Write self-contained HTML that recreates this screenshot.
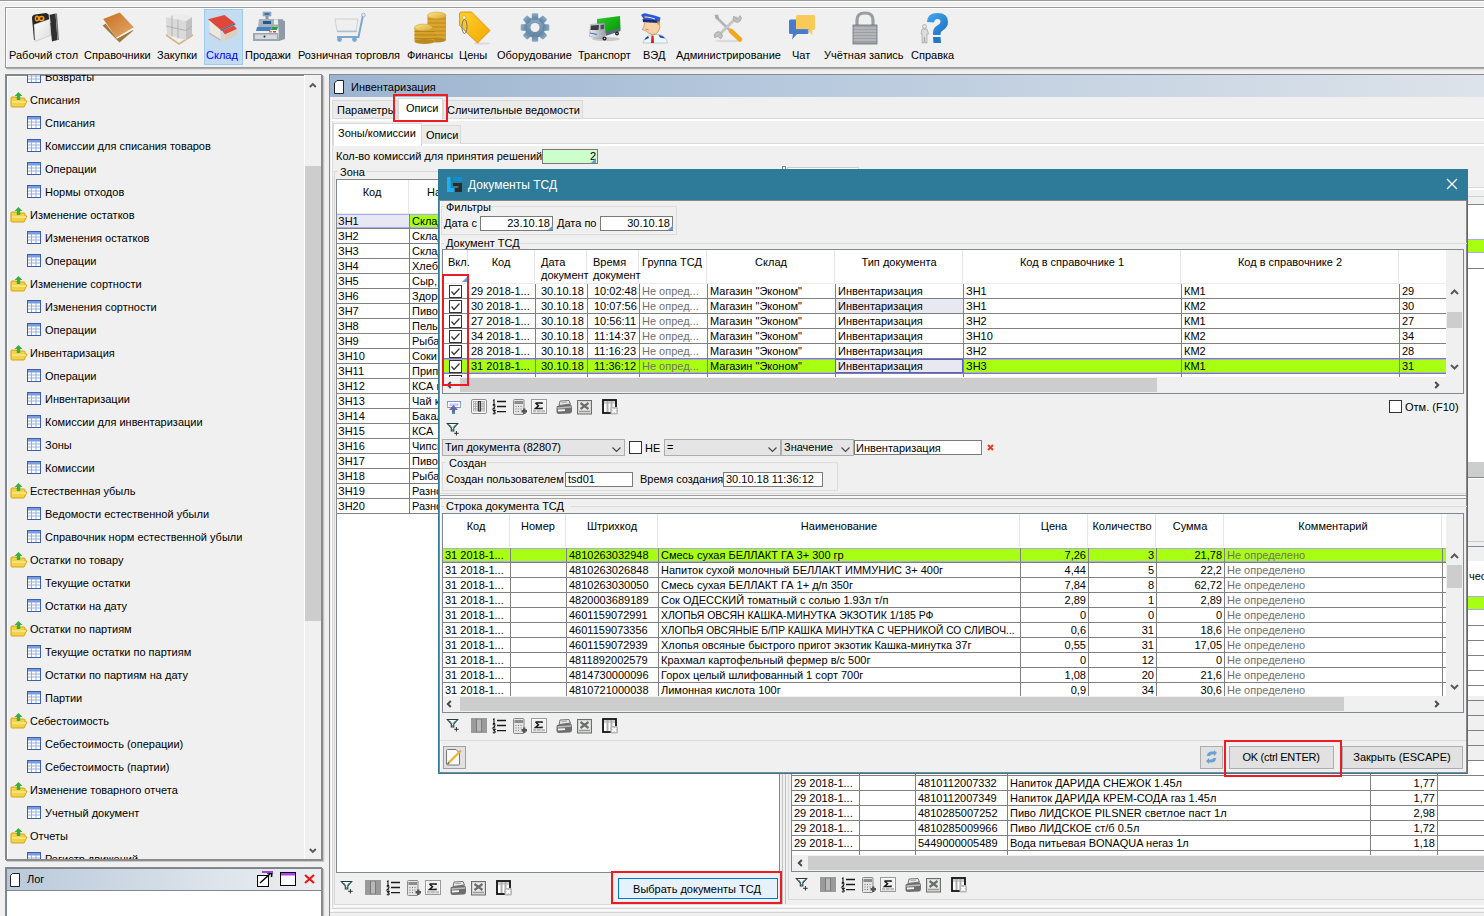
<!DOCTYPE html>
<html><head><meta charset="utf-8"><style>
html,body{margin:0;padding:0;width:1484px;height:916px;overflow:hidden;background:#f0f0f0;position:relative}
body div{position:absolute;box-sizing:border-box}
.t{font-family:"Liberation Sans",sans-serif;line-height:14px;white-space:nowrap;color:#000}
svg{position:absolute;overflow:visible}
</style></head><body>
<div style="left:0px;top:0px;width:1484px;height:1px;background:#9a9a9a"></div>
<div style="left:0px;top:1px;width:1484px;height:1px;background:#fff"></div>
<div style="left:4px;top:6px;width:1480px;height:1px;background:#fafafa"></div>
<div style="left:5px;top:7px;width:1479px;height:61px;border-top:1px solid #999;border-left:1px solid #999;border-bottom:1px solid #999;box-sizing:border-box"></div>
<div style="left:6px;top:8px;width:1478px;height:1px;background:#fff"></div>
<div style="left:6px;top:8px;width:1px;height:59px;background:#fff"></div>
<div style="left:6px;top:68px;width:1478px;height:1px;background:#acacac"></div>
<div style="left:7px;top:69px;width:1477px;height:1px;background:#dcdcdc"></div>
<div style="left:204px;top:9px;width:39px;height:56px;background:#c4dcf2;border:1px solid #9ccbf3"></div>
<div class="t" style="left:9px;top:48px;font-size:11px;">Рабочий стол</div>
<div class="t" style="left:84px;top:48px;font-size:11px;">Справочники</div>
<div class="t" style="left:157px;top:48px;font-size:11px;">Закупки</div>
<div class="t" style="left:206px;top:48px;font-size:11px;color:#0000ff">Склад</div>
<div class="t" style="left:245px;top:48px;font-size:11px;">Продажи</div>
<div class="t" style="left:298px;top:48px;font-size:11px;">Розничная торговля</div>
<div class="t" style="left:407px;top:48px;font-size:11px;">Финансы</div>
<div class="t" style="left:459px;top:48px;font-size:11px;">Цены</div>
<div class="t" style="left:497px;top:48px;font-size:11px;">Оборудование</div>
<div class="t" style="left:578px;top:48px;font-size:11px;">Транспорт</div>
<div class="t" style="left:643px;top:48px;font-size:11px;">ВЭД</div>
<div class="t" style="left:676px;top:48px;font-size:11px;">Администрирование</div>
<div class="t" style="left:792px;top:48px;font-size:11px;">Чат</div>
<div class="t" style="left:824px;top:48px;font-size:11px;">Учётная запись</div>
<div class="t" style="left:911px;top:48px;font-size:11px;">Справка</div>
<svg style="left:28px;top:10px" width="34" height="36" viewBox="28 10 34 36">
<defs><linearGradient id="pg1" x1="0" y1="0" x2="1" y2="1"><stop offset="0" stop-color="#fff"/><stop offset="1" stop-color="#dcdcdc"/></linearGradient></defs>
<path d="M32 18 Q32 15 35 14.5 L46 13 L50 15 L50 24 L35 40 L34 40 Z" fill="#262626"/>
<path d="M49 15 L55.5 13.5 L57.5 40 L52 41.5 Z" fill="#303030"/>
<path d="M55.5 13.5 L57 13.5 L59 40 L57.5 40Z" fill="#777"/>
<path d="M34 24.5 L50 19 L50.5 35.5 L35 41.5 Z" fill="url(#pg1)" stroke="#aaa" stroke-width="0.4"/>
<path d="M49 14 L50 23" stroke="#ddd" stroke-width="1"/>
<ellipse cx="37" cy="18.5" rx="1.6" ry="2.3" fill="none" stroke="#ff9a00" stroke-width="1.4"/>
<ellipse cx="41.5" cy="18.5" rx="2.2" ry="2" fill="none" stroke="#ff9a00" stroke-width="1.6"/>
</svg>
<svg style="left:98px;top:8px" width="40" height="40" viewBox="98 8 40 40">
<defs><linearGradient id="bk" x1="0" y1="0" x2="1" y2="1"><stop offset="0" stop-color="#c8701e"/><stop offset="1" stop-color="#e4aa70"/></linearGradient></defs>
<path d="M102.5 25.5 L117 17 L133.5 30.5 L119.5 42.5 Z" fill="#9f7a40"/>
<path d="M103.5 21 L120 12.5 L134 29.5 L117 38.5 Z" fill="#f6eee2"/>
<path d="M103.2 18.9 L119.8 12.6 L133.8 27.2 L116.3 37.7 Z" fill="url(#bk)"/>
<path d="M116.5 38.2 L133.5 28.5" stroke="#fff3e6" stroke-width="1.2"/>
</svg>
<svg style="left:160px;top:8px" width="36" height="38" viewBox="160 8 36 38">
<path d="M166 34 L179 43 L193 34 L193 36 L179 45 L166 36 Z" fill="#d6b382"/>
<path d="M166 17 L186 21 L186 40 L167 35 Z" fill="#dadada"/>
<path d="M186 21 L192 17 L192 35 L186 40 Z" fill="#c2c2c2"/>
<path d="M166 17 L179 13.5 L192 16.5 L186 21 Z" fill="#ececec"/>
<path d="M172 15.5 L172 36.5 M178 19.5 L178 38.5 M166 26 L186 30.5 L192 26" stroke="#a8a8a8" stroke-width="0.8" fill="none"/>
</svg>
<svg style="left:205px;top:12px" width="36" height="34" viewBox="205 12 36 34">
<path d="M209 20 L220.5 30 L220.5 40 L210 34 Z" fill="#ece8e0"/>
<path d="M209 33 L220.5 40" stroke="#b8b0a0" stroke-width="1.2"/>
<path d="M208 19.3 L224.5 15 L235 23.3 L220.5 29.8 Z" fill="#e0473a"/>
<path d="M220.5 29.8 L235 23.3 L235.5 24.5 L221 31Z" fill="#4a6a88"/>
<path d="M221 31 L221 41 L225 41 L225 34.5 Z" fill="#dcd6ca"/>
<path d="M222 30.5 L234 25.5 L237 29 L225 34.5 Z" fill="#e2483c"/>
<path d="M225 34.5 L237 29 L237 35 L225 41 Z" fill="#d8d0c0"/>
</svg>
<svg style="left:252px;top:11px" width="34" height="31" viewBox="252 11 34 31">
<rect x="263" y="12" width="8" height="4" fill="#9ab0c4" stroke="#7890a8" stroke-width="0.5"/>
<rect x="264.5" y="13" width="5" height="2" fill="#3a70b0"/>
<rect x="265.5" y="16" width="3" height="3" fill="#8a98a6"/>
<path d="M259 19 L283 19 L284 27 L258 27 Z" fill="#a8b2bc"/>
<rect x="263" y="21" width="8" height="3" fill="#1f5a90"/>
<rect x="274" y="19.5" width="6" height="5" fill="#eceeef"/>
<path d="M257 27 L272 27 L270 31 L256 31Z" fill="#4a80c0"/>
<path d="M272 27 L278 27 L277 30 L271 30Z" fill="#2fa038"/>
<rect x="269" y="31" width="3" height="1.5" fill="#f08030"/><rect x="273" y="31" width="3" height="1.5" fill="#e03070"/>
<path d="M253 33 L278 33 L279 41 L253 41 Z" fill="#9aa6b2"/>
<path d="M278 19 L285 21 L285 39 L279 41 Z" fill="#8e9aa6"/>
<rect x="255" y="34.5" width="22" height="4.5" fill="#d4dade"/>
<circle cx="264.5" cy="36.5" r="1" fill="#223"/>
</svg>
<svg style="left:332px;top:12px" width="36" height="32" viewBox="332 12 36 32">
<path d="M335 19 L358 19 L356 31 L337 31 Z" fill="#efefef" stroke="#c8c8c8" stroke-width="0.8"/>
<path d="M363 15 L358.5 37 L337 37" stroke="#7aa8d2" stroke-width="2" fill="none"/>
<path d="M337 31.5 L357 31.5" stroke="#a8c0d8" stroke-width="1.4"/>
<circle cx="363.5" cy="15" r="1.8" fill="#e8eef4" stroke="#8aaccc" stroke-width="0.8"/>
<circle cx="339.5" cy="39.5" r="2.4" fill="#7aa8d2"/>
<circle cx="354.5" cy="39.5" r="2.4" fill="#7aa8d2"/>
</svg>
<svg style="left:412px;top:10px" width="36" height="36" viewBox="412 10 36 36">
<defs><linearGradient id="cn" x1="0" y1="0" x2="1" y2="1"><stop offset="0" stop-color="#fbe890"/><stop offset="1" stop-color="#d8a830"/></linearGradient></defs>
<rect x="427.5" y="15" width="18.5" height="25" fill="#d9a52c"/>
<ellipse cx="436.7" cy="40" rx="9.2" ry="2.6" fill="#b88a20"/>
<path d="M427.5 19 H446 M427.5 23 H446 M427.5 27 H446 M427.5 31 H446 M427.5 35 H446" stroke="#b8861e" stroke-width="0.9"/>
<ellipse cx="436.7" cy="15.5" rx="9.2" ry="3.4" fill="url(#cn)" stroke="#c89628" stroke-width="0.5"/>
<rect x="414.5" y="27.5" width="20" height="14" fill="#d6a22a"/>
<ellipse cx="424.5" cy="41.5" rx="10" ry="2.5" fill="#b88a20"/>
<path d="M414.5 31.5 H434.5 M414.5 35 H436 M414.5 38.5 H434.5" stroke="#b0801c" stroke-width="0.9"/>
<ellipse cx="423.5" cy="27.5" rx="9" ry="3.4" fill="url(#cn)" stroke="#c89628" stroke-width="0.5"/>
</svg>
<svg style="left:458px;top:11px" width="34" height="34" viewBox="458 11 34 34">
<defs><linearGradient id="tg" x1="0" y1="0" x2="1" y2="1"><stop offset="0" stop-color="#ffd030"/><stop offset="1" stop-color="#f2a800"/></linearGradient></defs>
<ellipse cx="482" cy="43.5" rx="8" ry="1" fill="#d8d8d8"/>
<path d="M459.5 14 Q459.5 12 461.5 12 L471.5 12 L490 30.5 L477.5 43 L459.5 25.5 Z" fill="url(#tg)" stroke="#e08a00" stroke-width="0.9"/>
<circle cx="464" cy="17.5" r="1.8" fill="#f4f4f4" stroke="#e09000" stroke-width="0.6"/>
<ellipse cx="464.5" cy="26.5" rx="2.5" ry="7" fill="none" stroke="#687884" stroke-width="1"/>
</svg>
<svg style="left:518px;top:12px" width="34" height="32" viewBox="518 12 34 32">
<defs><linearGradient id="gr" x1="0" y1="0" x2="0" y2="1"><stop offset="0" stop-color="#8aaac6"/><stop offset="1" stop-color="#5f83a2"/></linearGradient></defs>
<g transform="translate(535,27.5)" fill="url(#gr)">
<circle r="10.3"/>
<g><rect x="-3.2" y="-14.3" width="6.4" height="6.5" rx="1.2"/></g>
<g transform="rotate(45)"><rect x="-3.2" y="-14.3" width="6.4" height="6.5" rx="1.2"/></g>
<g transform="rotate(90)"><rect x="-3.2" y="-14.3" width="6.4" height="6.5" rx="1.2"/></g>
<g transform="rotate(135)"><rect x="-3.2" y="-14.3" width="6.4" height="6.5" rx="1.2"/></g>
<g transform="rotate(180)"><rect x="-3.2" y="-14.3" width="6.4" height="6.5" rx="1.2"/></g>
<g transform="rotate(225)"><rect x="-3.2" y="-14.3" width="6.4" height="6.5" rx="1.2"/></g>
<g transform="rotate(270)"><rect x="-3.2" y="-14.3" width="6.4" height="6.5" rx="1.2"/></g>
<g transform="rotate(315)"><rect x="-3.2" y="-14.3" width="6.4" height="6.5" rx="1.2"/></g>
</g>
<circle cx="535" cy="27.5" r="4.6" fill="#f0f0f0"/>
</svg>
<svg style="left:586px;top:14px" width="36" height="30" viewBox="586 14 36 30">
<defs><linearGradient id="trg" x1="0" y1="0" x2="1" y2="1"><stop offset="0" stop-color="#22d022"/><stop offset="1" stop-color="#0a900a"/></linearGradient>
<linearGradient id="cab" x1="0" y1="0" x2="1" y2="0"><stop offset="0" stop-color="#e8ecf0"/><stop offset="1" stop-color="#9aa0a8"/></linearGradient></defs>
<ellipse cx="606" cy="39" rx="14" ry="2" fill="#c8c8c8"/>
<path d="M597 19 L620 16 L620.5 28.5 L606.5 33 L597 31.5 Z" fill="url(#trg)"/>
<path d="M605.5 32 L620.5 28 L620.5 31 L605.5 36 Z" fill="#5a6a7a"/>
<path d="M590.5 24.5 L604.5 23 L605.5 33.5 L602 39 L589.5 36.5 Z" fill="url(#cab)" stroke="#8a9098" stroke-width="0.5"/>
<path d="M591 25.5 L599 25 L598.5 30 L590.5 30 Z" fill="#3a3e44"/>
<path d="M600.5 25 L604 24.5 L604 29 L600.5 29.5Z" fill="#4a5058"/>
<path d="M590 33 L597 34.5" stroke="#3a70c0" stroke-width="1"/>
<circle cx="604.5" cy="38.5" r="2" fill="#1a1a1a"/><circle cx="604.5" cy="38.5" r="0.8" fill="#ddd"/>
<circle cx="617" cy="33.5" r="1.9" fill="#1a1a1a"/><circle cx="617" cy="33.5" r="0.7" fill="#ddd"/>
</svg>
<svg style="left:639px;top:11px" width="30" height="34" viewBox="639 11 30 34">
<path d="M643 43 Q645 36.5 652 34.5 L660 34.5 Q666 36.5 667.5 43 Z" fill="#eef8fb" stroke="#7aa8b0" stroke-width="0.5"/>
<path d="M651.5 35.5 L653.5 35.5 L654 43 L651 43 Z" fill="#e81818"/>
<path d="M658.5 35 Q663.5 35.5 665 38.5 L660 37.5Z" fill="#1a40c0"/><path d="M648 36 Q645 37.5 644.5 40 L649 38Z" fill="#1a40c0"/>
<path d="M644.5 21.5 L659.5 22.5 Q661 28 658 32 Q656 35 652 34.5 Q648 33.5 646 31 L642 29.5 L644 27 Z" fill="#f6d2a6" stroke="#9a6a40" stroke-width="0.5"/>
<path d="M645.5 29 L648.5 30" stroke="#8a5a30" stroke-width="0.6"/>
<path d="M641 15 Q644 12 648 14 Q655 15 660.5 17.5 L660 20.5 L644 19.5 Z" fill="#2a58d8"/>
<path d="M642.5 19 L660 20.5 L659 23 L643 22 Z" fill="#1a2a80"/>
<path d="M646 17 L650 17.5 L655 19" stroke="#e8eef8" stroke-width="1"/>
<circle cx="645.5" cy="17" r="1.1" fill="#e8b020"/>
<path d="M657.5 21 L660 22 L659.5 25 L657 24 Z" fill="#e0a020"/>
</svg>
<svg style="left:711px;top:12px" width="34" height="32" viewBox="711 12 34 32">
<ellipse cx="728" cy="41" rx="13" ry="1.3" fill="#dcdcdc"/>
<path d="M716 17 L738 38" stroke="#b4b4b4" stroke-width="2.6"/>
<path d="M714.5 15 L718 14.5 L719 18.5 L716 19Z" fill="#a8a8a8"/>
<path d="M737 17 L718 36" stroke="#c4c4c4" stroke-width="2.8"/>
<path d="M740 15.5 A4 4 0 1 1 734 16 L736 18.5 L738.5 18 Z" fill="#c0c0c0" stroke="#9a9a9a" stroke-width="0.6"/>
<path d="M715 38 A4 4 0 1 1 720.5 39 L718 36.5 L716 37 Z" fill="#c0c0c0" stroke="#9a9a9a" stroke-width="0.6"/>
<path d="M731 31 L740 39.5" stroke="#f2a81a" stroke-width="4.6" stroke-linecap="round"/>
</svg>
<svg style="left:787px;top:13px" width="30" height="30" viewBox="787 13 30 30">
<path d="M789 21 Q789 19.5 790.5 19.5 L807 19.5 Q808.5 19.5 808.5 21 L808.5 32.5 Q808.5 34 807 34 L797 34 L792 39.5 L793 34 L790.5 34 Q789 34 789 32.5 Z" fill="#4a7acc"/>
<path d="M796 16.5 Q796 15 797.5 15 L813.5 15 Q815 15 815 16.5 L815 28.5 Q815 30 813.5 30 L812 30 L812.5 35.5 L807.5 30 L797.5 30 Q796 30 796 28.5 Z" fill="#f8cb58"/>
<path d="M796 29 L808.5 29 L808.5 30 L796 30Z" fill="#5a86d0"/>
</svg>
<svg style="left:851px;top:11px" width="28" height="35" viewBox="851 11 28 35">
<path d="M857 25 L857 20 Q857 13 865 13 Q873 13 873 20 L873 25" stroke="#9a9ea2" stroke-width="3.2" fill="none"/>
<rect x="853" y="25" width="24" height="19" rx="1" fill="#9da1a5"/>
<path d="M853 28 H877 M853 31 H877 M853 34 H877 M853 37 H877 M853 40 H877" stroke="#c7cacd" stroke-width="1"/>
<rect x="853" y="25" width="24" height="19" fill="none" stroke="#6e7276" stroke-width="0.8"/>
</svg>
<svg style="left:918px;top:11px" width="32" height="34" viewBox="918 11 32 34">
<defs><linearGradient id="hq" x1="0" y1="0" x2="1" y2="1"><stop offset="0" stop-color="#48a8f0"/><stop offset="1" stop-color="#1a70c0"/></linearGradient></defs>
<path d="M927 22 Q927 13 937.5 13 Q948 13 948 22 Q948 27.5 942 31 Q940.5 32 940.5 34 L940.5 35 L933 35 L933 32.5 Q933 27.5 938 25 Q940.5 23.5 940.5 21.5 Q940.5 19 937.5 19 Q934.5 19 934 22.5 Z" fill="url(#hq)"/>
<path d="M933 37 L940.5 37 L941 43 L933.5 43 Z" fill="#1f78c8"/>
<circle cx="924.5" cy="26.5" r="2" fill="#e4e4e4" stroke="#888" stroke-width="0.5"/>
<path d="M922 29 L927 29 L928.5 34 L927 34 L927 43 L925 43 L924.5 37 L924 43 L922 43 L922 34 L921 34 Z" fill="#dcdcdc" stroke="#888" stroke-width="0.5"/>
</svg>
<div style="left:5px;top:74px;width:317px;height:786px;border:1px solid #8a8a8a;background:#f0f0f0"></div>
<div style="left:6px;top:75px;width:315px;height:1px;background:#7c828e"></div>
<div style="left:6px;top:75px;width:1px;height:784px;background:#7c828e"></div>
<div style="left:322px;top:75px;width:1px;height:786px;background:#8c8c8c"></div>
<div style="left:323px;top:76px;width:1px;height:785px;background:#c4c4c4"></div>
<div style="left:324px;top:77px;width:1px;height:784px;background:#e6e6e6"></div>
<div style="left:6px;top:860px;width:317px;height:1px;background:#8c8c8c"></div>
<div style="left:7px;top:861px;width:317px;height:1px;background:#c8c8c8"></div>
<div style="left:7px;top:76px;width:1px;height:783px;background:#fff"></div>
<div style="left:7px;top:76px;width:297px;height:1px;background:#fff"></div>
<div style="left:6px;top:75px;width:298px;height:784px;overflow:hidden">
<svg style="left:21px;top:-5px" width="14" height="13" viewBox="0 0 14 13"><rect x="0.5" y="0.5" width="13" height="12" fill="#fff" stroke="#3a5fb0"/><rect x="1" y="1" width="12" height="2.5" fill="#7a9de0"/><path d="M1 6 H13 M1 9 H13 M4.5 3 V12 M9 3 V12" stroke="#9ab0d8" stroke-width="1"/></svg>
<div class="t" style="left:39px;top:-5px;font-size:11px;">Возвраты</div>
<svg style="left:4px;top:17px" width="18" height="16" viewBox="0 0 18 16"><path d="M1 6 Q1 5 2 5 L6 5 L7 6 L14 6 Q15 6 15 7 L15 9 L17 9 L14 15 L2 15 Q1 15 1 14 Z" fill="#f3d24a" stroke="#d4a40c" stroke-width="1"/><path d="M2 10 L16 10" stroke="#fbe98a" stroke-width="1.5"/><path d="M8.5 0 L12.5 4 L10.2 4 L10.2 8 L6.8 8 L6.8 4 L4.5 4 Z" fill="#3cae3c"/></svg>
<div class="t" style="left:24px;top:18px;font-size:11px;">Списания</div>
<svg style="left:21px;top:41px" width="14" height="13" viewBox="0 0 14 13"><rect x="0.5" y="0.5" width="13" height="12" fill="#fff" stroke="#3a5fb0"/><rect x="1" y="1" width="12" height="2.5" fill="#7a9de0"/><path d="M1 6 H13 M1 9 H13 M4.5 3 V12 M9 3 V12" stroke="#9ab0d8" stroke-width="1"/></svg>
<div class="t" style="left:39px;top:41px;font-size:11px;">Списания</div>
<svg style="left:21px;top:64px" width="14" height="13" viewBox="0 0 14 13"><rect x="0.5" y="0.5" width="13" height="12" fill="#fff" stroke="#3a5fb0"/><rect x="1" y="1" width="12" height="2.5" fill="#7a9de0"/><path d="M1 6 H13 M1 9 H13 M4.5 3 V12 M9 3 V12" stroke="#9ab0d8" stroke-width="1"/></svg>
<div class="t" style="left:39px;top:64px;font-size:11px;">Комиссии для списания товаров</div>
<svg style="left:21px;top:87px" width="14" height="13" viewBox="0 0 14 13"><rect x="0.5" y="0.5" width="13" height="12" fill="#fff" stroke="#3a5fb0"/><rect x="1" y="1" width="12" height="2.5" fill="#7a9de0"/><path d="M1 6 H13 M1 9 H13 M4.5 3 V12 M9 3 V12" stroke="#9ab0d8" stroke-width="1"/></svg>
<div class="t" style="left:39px;top:87px;font-size:11px;">Операции</div>
<svg style="left:21px;top:110px" width="14" height="13" viewBox="0 0 14 13"><rect x="0.5" y="0.5" width="13" height="12" fill="#fff" stroke="#3a5fb0"/><rect x="1" y="1" width="12" height="2.5" fill="#7a9de0"/><path d="M1 6 H13 M1 9 H13 M4.5 3 V12 M9 3 V12" stroke="#9ab0d8" stroke-width="1"/></svg>
<div class="t" style="left:39px;top:110px;font-size:11px;">Нормы отходов</div>
<svg style="left:4px;top:132px" width="18" height="16" viewBox="0 0 18 16"><path d="M1 6 Q1 5 2 5 L6 5 L7 6 L14 6 Q15 6 15 7 L15 9 L17 9 L14 15 L2 15 Q1 15 1 14 Z" fill="#f3d24a" stroke="#d4a40c" stroke-width="1"/><path d="M2 10 L16 10" stroke="#fbe98a" stroke-width="1.5"/><path d="M8.5 0 L12.5 4 L10.2 4 L10.2 8 L6.8 8 L6.8 4 L4.5 4 Z" fill="#3cae3c"/></svg>
<div class="t" style="left:24px;top:133px;font-size:11px;">Изменение остатков</div>
<svg style="left:21px;top:156px" width="14" height="13" viewBox="0 0 14 13"><rect x="0.5" y="0.5" width="13" height="12" fill="#fff" stroke="#3a5fb0"/><rect x="1" y="1" width="12" height="2.5" fill="#7a9de0"/><path d="M1 6 H13 M1 9 H13 M4.5 3 V12 M9 3 V12" stroke="#9ab0d8" stroke-width="1"/></svg>
<div class="t" style="left:39px;top:156px;font-size:11px;">Изменения остатков</div>
<svg style="left:21px;top:179px" width="14" height="13" viewBox="0 0 14 13"><rect x="0.5" y="0.5" width="13" height="12" fill="#fff" stroke="#3a5fb0"/><rect x="1" y="1" width="12" height="2.5" fill="#7a9de0"/><path d="M1 6 H13 M1 9 H13 M4.5 3 V12 M9 3 V12" stroke="#9ab0d8" stroke-width="1"/></svg>
<div class="t" style="left:39px;top:179px;font-size:11px;">Операции</div>
<svg style="left:4px;top:201px" width="18" height="16" viewBox="0 0 18 16"><path d="M1 6 Q1 5 2 5 L6 5 L7 6 L14 6 Q15 6 15 7 L15 9 L17 9 L14 15 L2 15 Q1 15 1 14 Z" fill="#f3d24a" stroke="#d4a40c" stroke-width="1"/><path d="M2 10 L16 10" stroke="#fbe98a" stroke-width="1.5"/><path d="M8.5 0 L12.5 4 L10.2 4 L10.2 8 L6.8 8 L6.8 4 L4.5 4 Z" fill="#3cae3c"/></svg>
<div class="t" style="left:24px;top:202px;font-size:11px;">Изменение сортности</div>
<svg style="left:21px;top:225px" width="14" height="13" viewBox="0 0 14 13"><rect x="0.5" y="0.5" width="13" height="12" fill="#fff" stroke="#3a5fb0"/><rect x="1" y="1" width="12" height="2.5" fill="#7a9de0"/><path d="M1 6 H13 M1 9 H13 M4.5 3 V12 M9 3 V12" stroke="#9ab0d8" stroke-width="1"/></svg>
<div class="t" style="left:39px;top:225px;font-size:11px;">Изменения сортности</div>
<svg style="left:21px;top:248px" width="14" height="13" viewBox="0 0 14 13"><rect x="0.5" y="0.5" width="13" height="12" fill="#fff" stroke="#3a5fb0"/><rect x="1" y="1" width="12" height="2.5" fill="#7a9de0"/><path d="M1 6 H13 M1 9 H13 M4.5 3 V12 M9 3 V12" stroke="#9ab0d8" stroke-width="1"/></svg>
<div class="t" style="left:39px;top:248px;font-size:11px;">Операции</div>
<svg style="left:4px;top:270px" width="18" height="16" viewBox="0 0 18 16"><path d="M1 6 Q1 5 2 5 L6 5 L7 6 L14 6 Q15 6 15 7 L15 9 L17 9 L14 15 L2 15 Q1 15 1 14 Z" fill="#f3d24a" stroke="#d4a40c" stroke-width="1"/><path d="M2 10 L16 10" stroke="#fbe98a" stroke-width="1.5"/><path d="M8.5 0 L12.5 4 L10.2 4 L10.2 8 L6.8 8 L6.8 4 L4.5 4 Z" fill="#3cae3c"/></svg>
<div class="t" style="left:24px;top:271px;font-size:11px;">Инвентаризация</div>
<svg style="left:21px;top:294px" width="14" height="13" viewBox="0 0 14 13"><rect x="0.5" y="0.5" width="13" height="12" fill="#fff" stroke="#3a5fb0"/><rect x="1" y="1" width="12" height="2.5" fill="#7a9de0"/><path d="M1 6 H13 M1 9 H13 M4.5 3 V12 M9 3 V12" stroke="#9ab0d8" stroke-width="1"/></svg>
<div class="t" style="left:39px;top:294px;font-size:11px;">Операции</div>
<svg style="left:21px;top:317px" width="14" height="13" viewBox="0 0 14 13"><rect x="0.5" y="0.5" width="13" height="12" fill="#fff" stroke="#3a5fb0"/><rect x="1" y="1" width="12" height="2.5" fill="#7a9de0"/><path d="M1 6 H13 M1 9 H13 M4.5 3 V12 M9 3 V12" stroke="#9ab0d8" stroke-width="1"/></svg>
<div class="t" style="left:39px;top:317px;font-size:11px;">Инвентаризации</div>
<svg style="left:21px;top:340px" width="14" height="13" viewBox="0 0 14 13"><rect x="0.5" y="0.5" width="13" height="12" fill="#fff" stroke="#3a5fb0"/><rect x="1" y="1" width="12" height="2.5" fill="#7a9de0"/><path d="M1 6 H13 M1 9 H13 M4.5 3 V12 M9 3 V12" stroke="#9ab0d8" stroke-width="1"/></svg>
<div class="t" style="left:39px;top:340px;font-size:11px;">Комиссии для инвентаризации</div>
<svg style="left:21px;top:363px" width="14" height="13" viewBox="0 0 14 13"><rect x="0.5" y="0.5" width="13" height="12" fill="#fff" stroke="#3a5fb0"/><rect x="1" y="1" width="12" height="2.5" fill="#7a9de0"/><path d="M1 6 H13 M1 9 H13 M4.5 3 V12 M9 3 V12" stroke="#9ab0d8" stroke-width="1"/></svg>
<div class="t" style="left:39px;top:363px;font-size:11px;">Зоны</div>
<svg style="left:21px;top:386px" width="14" height="13" viewBox="0 0 14 13"><rect x="0.5" y="0.5" width="13" height="12" fill="#fff" stroke="#3a5fb0"/><rect x="1" y="1" width="12" height="2.5" fill="#7a9de0"/><path d="M1 6 H13 M1 9 H13 M4.5 3 V12 M9 3 V12" stroke="#9ab0d8" stroke-width="1"/></svg>
<div class="t" style="left:39px;top:386px;font-size:11px;">Комиссии</div>
<svg style="left:4px;top:408px" width="18" height="16" viewBox="0 0 18 16"><path d="M1 6 Q1 5 2 5 L6 5 L7 6 L14 6 Q15 6 15 7 L15 9 L17 9 L14 15 L2 15 Q1 15 1 14 Z" fill="#f3d24a" stroke="#d4a40c" stroke-width="1"/><path d="M2 10 L16 10" stroke="#fbe98a" stroke-width="1.5"/><path d="M8.5 0 L12.5 4 L10.2 4 L10.2 8 L6.8 8 L6.8 4 L4.5 4 Z" fill="#3cae3c"/></svg>
<div class="t" style="left:24px;top:409px;font-size:11px;">Естественная убыль</div>
<svg style="left:21px;top:432px" width="14" height="13" viewBox="0 0 14 13"><rect x="0.5" y="0.5" width="13" height="12" fill="#fff" stroke="#3a5fb0"/><rect x="1" y="1" width="12" height="2.5" fill="#7a9de0"/><path d="M1 6 H13 M1 9 H13 M4.5 3 V12 M9 3 V12" stroke="#9ab0d8" stroke-width="1"/></svg>
<div class="t" style="left:39px;top:432px;font-size:11px;">Ведомости естественной убыли</div>
<svg style="left:21px;top:455px" width="14" height="13" viewBox="0 0 14 13"><rect x="0.5" y="0.5" width="13" height="12" fill="#fff" stroke="#3a5fb0"/><rect x="1" y="1" width="12" height="2.5" fill="#7a9de0"/><path d="M1 6 H13 M1 9 H13 M4.5 3 V12 M9 3 V12" stroke="#9ab0d8" stroke-width="1"/></svg>
<div class="t" style="left:39px;top:455px;font-size:11px;">Справочник норм естественной убыли</div>
<svg style="left:4px;top:477px" width="18" height="16" viewBox="0 0 18 16"><path d="M1 6 Q1 5 2 5 L6 5 L7 6 L14 6 Q15 6 15 7 L15 9 L17 9 L14 15 L2 15 Q1 15 1 14 Z" fill="#f3d24a" stroke="#d4a40c" stroke-width="1"/><path d="M2 10 L16 10" stroke="#fbe98a" stroke-width="1.5"/><path d="M8.5 0 L12.5 4 L10.2 4 L10.2 8 L6.8 8 L6.8 4 L4.5 4 Z" fill="#3cae3c"/></svg>
<div class="t" style="left:24px;top:478px;font-size:11px;">Остатки по товару</div>
<svg style="left:21px;top:501px" width="14" height="13" viewBox="0 0 14 13"><rect x="0.5" y="0.5" width="13" height="12" fill="#fff" stroke="#3a5fb0"/><rect x="1" y="1" width="12" height="2.5" fill="#7a9de0"/><path d="M1 6 H13 M1 9 H13 M4.5 3 V12 M9 3 V12" stroke="#9ab0d8" stroke-width="1"/></svg>
<div class="t" style="left:39px;top:501px;font-size:11px;">Текущие остатки</div>
<svg style="left:21px;top:524px" width="14" height="13" viewBox="0 0 14 13"><rect x="0.5" y="0.5" width="13" height="12" fill="#fff" stroke="#3a5fb0"/><rect x="1" y="1" width="12" height="2.5" fill="#7a9de0"/><path d="M1 6 H13 M1 9 H13 M4.5 3 V12 M9 3 V12" stroke="#9ab0d8" stroke-width="1"/></svg>
<div class="t" style="left:39px;top:524px;font-size:11px;">Остатки на дату</div>
<svg style="left:4px;top:546px" width="18" height="16" viewBox="0 0 18 16"><path d="M1 6 Q1 5 2 5 L6 5 L7 6 L14 6 Q15 6 15 7 L15 9 L17 9 L14 15 L2 15 Q1 15 1 14 Z" fill="#f3d24a" stroke="#d4a40c" stroke-width="1"/><path d="M2 10 L16 10" stroke="#fbe98a" stroke-width="1.5"/><path d="M8.5 0 L12.5 4 L10.2 4 L10.2 8 L6.8 8 L6.8 4 L4.5 4 Z" fill="#3cae3c"/></svg>
<div class="t" style="left:24px;top:547px;font-size:11px;">Остатки по партиям</div>
<svg style="left:21px;top:570px" width="14" height="13" viewBox="0 0 14 13"><rect x="0.5" y="0.5" width="13" height="12" fill="#fff" stroke="#3a5fb0"/><rect x="1" y="1" width="12" height="2.5" fill="#7a9de0"/><path d="M1 6 H13 M1 9 H13 M4.5 3 V12 M9 3 V12" stroke="#9ab0d8" stroke-width="1"/></svg>
<div class="t" style="left:39px;top:570px;font-size:11px;">Текущие остатки по партиям</div>
<svg style="left:21px;top:593px" width="14" height="13" viewBox="0 0 14 13"><rect x="0.5" y="0.5" width="13" height="12" fill="#fff" stroke="#3a5fb0"/><rect x="1" y="1" width="12" height="2.5" fill="#7a9de0"/><path d="M1 6 H13 M1 9 H13 M4.5 3 V12 M9 3 V12" stroke="#9ab0d8" stroke-width="1"/></svg>
<div class="t" style="left:39px;top:593px;font-size:11px;">Остатки по партиям на дату</div>
<svg style="left:21px;top:616px" width="14" height="13" viewBox="0 0 14 13"><rect x="0.5" y="0.5" width="13" height="12" fill="#fff" stroke="#3a5fb0"/><rect x="1" y="1" width="12" height="2.5" fill="#7a9de0"/><path d="M1 6 H13 M1 9 H13 M4.5 3 V12 M9 3 V12" stroke="#9ab0d8" stroke-width="1"/></svg>
<div class="t" style="left:39px;top:616px;font-size:11px;">Партии</div>
<svg style="left:4px;top:638px" width="18" height="16" viewBox="0 0 18 16"><path d="M1 6 Q1 5 2 5 L6 5 L7 6 L14 6 Q15 6 15 7 L15 9 L17 9 L14 15 L2 15 Q1 15 1 14 Z" fill="#f3d24a" stroke="#d4a40c" stroke-width="1"/><path d="M2 10 L16 10" stroke="#fbe98a" stroke-width="1.5"/><path d="M8.5 0 L12.5 4 L10.2 4 L10.2 8 L6.8 8 L6.8 4 L4.5 4 Z" fill="#3cae3c"/></svg>
<div class="t" style="left:24px;top:639px;font-size:11px;">Себестоимость</div>
<svg style="left:21px;top:662px" width="14" height="13" viewBox="0 0 14 13"><rect x="0.5" y="0.5" width="13" height="12" fill="#fff" stroke="#3a5fb0"/><rect x="1" y="1" width="12" height="2.5" fill="#7a9de0"/><path d="M1 6 H13 M1 9 H13 M4.5 3 V12 M9 3 V12" stroke="#9ab0d8" stroke-width="1"/></svg>
<div class="t" style="left:39px;top:662px;font-size:11px;">Себестоимость (операции)</div>
<svg style="left:21px;top:685px" width="14" height="13" viewBox="0 0 14 13"><rect x="0.5" y="0.5" width="13" height="12" fill="#fff" stroke="#3a5fb0"/><rect x="1" y="1" width="12" height="2.5" fill="#7a9de0"/><path d="M1 6 H13 M1 9 H13 M4.5 3 V12 M9 3 V12" stroke="#9ab0d8" stroke-width="1"/></svg>
<div class="t" style="left:39px;top:685px;font-size:11px;">Себестоимость (партии)</div>
<svg style="left:4px;top:707px" width="18" height="16" viewBox="0 0 18 16"><path d="M1 6 Q1 5 2 5 L6 5 L7 6 L14 6 Q15 6 15 7 L15 9 L17 9 L14 15 L2 15 Q1 15 1 14 Z" fill="#f3d24a" stroke="#d4a40c" stroke-width="1"/><path d="M2 10 L16 10" stroke="#fbe98a" stroke-width="1.5"/><path d="M8.5 0 L12.5 4 L10.2 4 L10.2 8 L6.8 8 L6.8 4 L4.5 4 Z" fill="#3cae3c"/></svg>
<div class="t" style="left:24px;top:708px;font-size:11px;">Изменение товарного отчета</div>
<svg style="left:21px;top:731px" width="14" height="13" viewBox="0 0 14 13"><rect x="0.5" y="0.5" width="13" height="12" fill="#fff" stroke="#3a5fb0"/><rect x="1" y="1" width="12" height="2.5" fill="#7a9de0"/><path d="M1 6 H13 M1 9 H13 M4.5 3 V12 M9 3 V12" stroke="#9ab0d8" stroke-width="1"/></svg>
<div class="t" style="left:39px;top:731px;font-size:11px;">Учетный документ</div>
<svg style="left:4px;top:753px" width="18" height="16" viewBox="0 0 18 16"><path d="M1 6 Q1 5 2 5 L6 5 L7 6 L14 6 Q15 6 15 7 L15 9 L17 9 L14 15 L2 15 Q1 15 1 14 Z" fill="#f3d24a" stroke="#d4a40c" stroke-width="1"/><path d="M2 10 L16 10" stroke="#fbe98a" stroke-width="1.5"/><path d="M8.5 0 L12.5 4 L10.2 4 L10.2 8 L6.8 8 L6.8 4 L4.5 4 Z" fill="#3cae3c"/></svg>
<div class="t" style="left:24px;top:754px;font-size:11px;">Отчеты</div>
<svg style="left:21px;top:777px" width="14" height="13" viewBox="0 0 14 13"><rect x="0.5" y="0.5" width="13" height="12" fill="#fff" stroke="#3a5fb0"/><rect x="1" y="1" width="12" height="2.5" fill="#7a9de0"/><path d="M1 6 H13 M1 9 H13 M4.5 3 V12 M9 3 V12" stroke="#9ab0d8" stroke-width="1"/></svg>
<div class="t" style="left:39px;top:777px;font-size:11px;">Регистр движений</div>
</div>
<div style="left:304px;top:75px;width:1px;height:784px;background:#fff"></div>
<div style="left:305px;top:75px;width:16px;height:784px;background:#f0f0f0"></div>
<div style="left:305px;top:166px;width:16px;height:455px;background:#cdcdcd"></div>
<svg style="left:309px;top:82px" width="8" height="6" viewBox="0 0 8 6"><path d="M0.8 5 L3.8 2 L6.8 5" stroke="#5a5a5a" stroke-width="1.9" fill="none"/></svg>
<svg style="left:309px;top:848px" width="8" height="6" viewBox="0 0 8 6"><path d="M0.8 1 L3.8 4 L6.8 1" stroke="#5a5a5a" stroke-width="1.9" fill="none"/></svg>
<div style="left:5px;top:867px;width:317px;height:49px;border:1px solid #8a8a8a;border-bottom:none;background:#fff"></div>
<div style="left:6px;top:868px;width:315px;height:1px;background:#7c828e"></div>
<div style="left:6px;top:868px;width:1px;height:48px;background:#7c828e"></div>
<div style="left:7px;top:869px;width:314px;height:21px;background:linear-gradient(to right,#b9c9da,#dfe5ec 70%,#eceef0)"></div>
<div style="left:6px;top:890px;width:315px;height:1px;background:#828790"></div>
<div style="left:322px;top:868px;width:1px;height:48px;background:#8c8c8c"></div>
<div style="left:323px;top:869px;width:1px;height:47px;background:#c4c4c4"></div>
<div style="left:324px;top:870px;width:1px;height:46px;background:#e6e6e6"></div>
<svg style="left:10px;top:873px" width="10" height="14" viewBox="0 0 10 14"><path d="M2.5 0.5 L9.5 0.5 L9.5 13.5 L0.5 13.5 L0.5 2.5 Z" fill="#fff" stroke="#222" stroke-width="1"/></svg>
<div class="t" style="left:27px;top:872px;font-size:11px;">Лог</div>
<svg style="left:257px;top:871px" width="17" height="16" viewBox="0 0 17 16"><rect x="0.5" y="4.5" width="11" height="11" fill="#fff" stroke="#000"/><path d="M3 12 L14 2 M10 2 L15 1.5 L14.5 6" stroke="#000" stroke-width="1.5" fill="none"/><rect x="5" y="0" width="11" height="2" fill="#a040e0"/></svg>
<svg style="left:280px;top:872px" width="16" height="14" viewBox="0 0 16 14"><rect x="0.5" y="0.5" width="15" height="13" fill="#fff" stroke="#000"/><rect x="1" y="1" width="14" height="2.5" fill="#b040f0"/></svg>
<svg style="left:304px;top:874px" width="11" height="10" viewBox="0 0 11 10"><path d="M1 1 L10 9 M10 1 L1 9" stroke="#f01010" stroke-width="2"/></svg>
<div style="left:329px;top:74px;width:1155px;height:842px;border-left:1px solid #8a8a8a;border-top:1px solid #8a8a8a;background:#f0f0f0"></div>
<div style="left:330px;top:75px;width:1154px;height:22px;background:linear-gradient(to right,#9cb4d0,#b7c9dd 40%,#dde3ea)"></div>
<svg style="left:334px;top:80px;" width="10" height="14" viewBox="0 0 10 14"><path d="M3 0.5 L9.5 0.5 L9.5 13.5 L0.5 13.5 L0.5 3 Z" fill="#fff" stroke="#222"/></svg>
<div class="t" style="left:351px;top:80px;font-size:11px;">Инвентаризация</div>
<div style="left:331px;top:97px;width:1px;height:815px;background:#fff"></div>
<div style="left:330px;top:912px;width:1154px;height:1px;background:#d4d4d4"></div>
<div style="left:332px;top:908px;width:1152px;height:1px;background:#d4d4d4"></div>
<div style="left:332px;top:909px;width:1152px;height:2px;background:#fafafa"></div>
<div style="left:334px;top:905px;width:1150px;height:2px;background:#fafafa"></div>
<div style="left:332px;top:100px;width:66px;height:19px;background:#ebebeb;border:1px solid #d9d9d9;border-bottom:none"></div>
<div class="t" style="left:337px;top:103px;font-size:11px;">Параметры</div>
<div style="left:443px;top:100px;width:140px;height:19px;background:#ebebeb;border:1px solid #d9d9d9;border-bottom:none"></div>
<div class="t" style="left:447px;top:103px;font-size:11px;">Сличительные ведомости</div>
<div style="left:332px;top:118px;width:1152px;height:1px;background:#d9d9d9"></div>
<div style="left:332px;top:119px;width:1152px;height:2px;background:#fff"></div>
<div style="left:398px;top:98px;width:45px;height:22px;background:#fff;border:1px solid #d9d9d9;border-bottom:none"></div>
<div class="t" style="left:406px;top:101px;font-size:11px;">Описи</div>
<div style="left:333px;top:143px;width:1151px;height:1px;background:#d9d9d9"></div>
<div style="left:333px;top:144px;width:1151px;height:2px;background:#fff"></div>
<div style="left:421px;top:125px;width:40px;height:19px;background:#ebebeb;border:1px solid #d9d9d9;border-bottom:none"></div>
<div class="t" style="left:426px;top:128px;font-size:11px;">Описи</div>
<div style="left:333px;top:123px;width:89px;height:23px;background:#fff;border:1px solid #d9d9d9;border-bottom:none"></div>
<div class="t" style="left:338px;top:126px;font-size:11px;">Зоны/комиссии</div>
<div style="left:332px;top:121px;width:1px;height:787px;background:#d9d9d9"></div>
<div class="t" style="left:336px;top:149px;font-size:11px;">Кол-во комиссий для принятия решений</div>
<div style="left:542px;top:149px;width:56px;height:15px;background:#ccffcc;border:1px solid #7a7a7a"></div>
<div class="t" style="right:888px;top:149px;font-size:11px;">2</div>
<svg style="left:591px;top:158px;" width="5" height="5" viewBox="0 0 5 5"><path d="M5 0 L5 5 L0 5Z" fill="#6a9ad0"/></svg>
<div style="left:782px;top:166px;width:4px;height:5px;border:1px solid #888"></div>
<div style="left:787px;top:167px;width:72px;height:3px;background:#fff;border:1px solid #ccc;border-bottom:none"></div>
<div style="left:334px;top:171px;width:448px;height:734px;border:1px solid #d8d8d8;border-right:none"></div>
<div style="left:338px;top:166px;width:28px;height:12px;background:#f0f0f0"></div>
<div class="t" style="left:340px;top:165px;font-size:11px;">Зона</div>
<div style="left:336px;top:179px;width:444px;height:694px;border:1px solid #828790;background:#fff"></div>
<div style="left:337px;top:180px;width:442px;height:34px;background:#fff"></div>
<div style="left:408px;top:180px;width:1px;height:33px;background:#e5e5e5"></div>
<div style="left:337px;top:213px;width:442px;height:1px;background:#ededed"></div>
<div class="t" style="left:172px;width:400px;text-align:center;top:185px;font-size:11px;">Код</div>
<div class="t" style="left:427px;top:185px;font-size:11px;">Наименование</div>
<div style="left:337px;top:214px;width:442px;height:300px;overflow:hidden;background:#fff">
<div style="left:0;top:14px;width:442px;height:1px;background:#808080"></div>
<div style="left:0;top:29px;width:442px;height:1px;background:#808080"></div>
<div style="left:0;top:44px;width:442px;height:1px;background:#808080"></div>
<div style="left:0;top:59px;width:442px;height:1px;background:#808080"></div>
<div style="left:0;top:74px;width:442px;height:1px;background:#808080"></div>
<div style="left:0;top:89px;width:442px;height:1px;background:#808080"></div>
<div style="left:0;top:104px;width:442px;height:1px;background:#808080"></div>
<div style="left:0;top:119px;width:442px;height:1px;background:#808080"></div>
<div style="left:0;top:134px;width:442px;height:1px;background:#808080"></div>
<div style="left:0;top:149px;width:442px;height:1px;background:#808080"></div>
<div style="left:0;top:164px;width:442px;height:1px;background:#808080"></div>
<div style="left:0;top:179px;width:442px;height:1px;background:#808080"></div>
<div style="left:0;top:194px;width:442px;height:1px;background:#808080"></div>
<div style="left:0;top:209px;width:442px;height:1px;background:#808080"></div>
<div style="left:0;top:224px;width:442px;height:1px;background:#808080"></div>
<div style="left:0;top:239px;width:442px;height:1px;background:#808080"></div>
<div style="left:0;top:254px;width:442px;height:1px;background:#808080"></div>
<div style="left:0;top:269px;width:442px;height:1px;background:#808080"></div>
<div style="left:0;top:284px;width:442px;height:1px;background:#808080"></div>
<div style="left:0;top:299px;width:442px;height:1px;background:#808080"></div>
<div style="left:72px;top:0;width:1px;height:300px;background:#808080"></div>
<div class="t" style="left:1px;top:0px;font-size:11px;">ЗН1</div>
<div class="t" style="left:75px;top:0px;font-size:11px;">Склад №1</div>
<div class="t" style="left:1px;top:15px;font-size:11px;">ЗН2</div>
<div class="t" style="left:75px;top:15px;font-size:11px;">Склад №2</div>
<div class="t" style="left:1px;top:30px;font-size:11px;">ЗН3</div>
<div class="t" style="left:75px;top:30px;font-size:11px;">Склад №3</div>
<div class="t" style="left:1px;top:45px;font-size:11px;">ЗН4</div>
<div class="t" style="left:75px;top:45px;font-size:11px;">Хлеб</div>
<div class="t" style="left:1px;top:60px;font-size:11px;">ЗН5</div>
<div class="t" style="left:75px;top:60px;font-size:11px;">Сыр, колбаса</div>
<div class="t" style="left:1px;top:75px;font-size:11px;">ЗН6</div>
<div class="t" style="left:75px;top:75px;font-size:11px;">Здоровое питание</div>
<div class="t" style="left:1px;top:90px;font-size:11px;">ЗН7</div>
<div class="t" style="left:75px;top:90px;font-size:11px;">Пиво, напитки</div>
<div class="t" style="left:1px;top:105px;font-size:11px;">ЗН8</div>
<div class="t" style="left:75px;top:105px;font-size:11px;">Пельмени</div>
<div class="t" style="left:1px;top:120px;font-size:11px;">ЗН9</div>
<div class="t" style="left:75px;top:120px;font-size:11px;">Рыба</div>
<div class="t" style="left:1px;top:135px;font-size:11px;">ЗН10</div>
<div class="t" style="left:75px;top:135px;font-size:11px;">Соки</div>
<div class="t" style="left:1px;top:150px;font-size:11px;">ЗН11</div>
<div class="t" style="left:75px;top:150px;font-size:11px;">Приправы</div>
<div class="t" style="left:1px;top:165px;font-size:11px;">ЗН12</div>
<div class="t" style="left:75px;top:165px;font-size:11px;">КСА и табак</div>
<div class="t" style="left:1px;top:180px;font-size:11px;">ЗН13</div>
<div class="t" style="left:75px;top:180px;font-size:11px;">Чай кофе</div>
<div class="t" style="left:1px;top:195px;font-size:11px;">ЗН14</div>
<div class="t" style="left:75px;top:195px;font-size:11px;">Бакалея</div>
<div class="t" style="left:1px;top:210px;font-size:11px;">ЗН15</div>
<div class="t" style="left:75px;top:210px;font-size:11px;">КСА</div>
<div class="t" style="left:1px;top:225px;font-size:11px;">ЗН16</div>
<div class="t" style="left:75px;top:225px;font-size:11px;">Чипсы</div>
<div class="t" style="left:1px;top:240px;font-size:11px;">ЗН17</div>
<div class="t" style="left:75px;top:240px;font-size:11px;">Пиво</div>
<div class="t" style="left:1px;top:255px;font-size:11px;">ЗН18</div>
<div class="t" style="left:75px;top:255px;font-size:11px;">Рыба</div>
<div class="t" style="left:1px;top:270px;font-size:11px;">ЗН19</div>
<div class="t" style="left:75px;top:270px;font-size:11px;">Разное</div>
<div class="t" style="left:1px;top:285px;font-size:11px;">ЗН20</div>
<div class="t" style="left:75px;top:285px;font-size:11px;">Разное</div>
</div>
<div style="left:337px;top:214px;width:72px;height:14px;background:#e8e8f2;border-top:1px solid #a8a8ff;border-bottom:1px solid #a8a8ff"></div>
<div class="t" style="left:338px;top:214px;font-size:11px;">ЗН1</div>
<div style="left:410px;top:214px;width:369px;height:14px;background:#a8ff12;border-top:1px solid #a8a8ff;border-bottom:1px solid #a8a8ff"></div>
<div class="t" style="left:412px;top:214px;font-size:11px;">Склад №1</div>
<svg style="left:341px;top:881px;" width="12" height="16" viewBox="0 0 12 16"><path d="M0.3 0.5 L10.7 0.5 L6.8 5 L6.8 8 L4.3 8 L4.3 5 Z" fill="#fafafa" stroke="#2a3a3a" stroke-width="1.1"/><path d="M2.5 1.8 L5 4.8 M8.5 1.8 L6.3 4.5 M4.8 6.8 H6.3" stroke="#1a8080" stroke-width="1"/><path d="M9.4 8 V12.5 M7.1 10.3 H11.7" stroke="#333" stroke-width="1"/></svg>
<svg style="left:365px;top:880px;" width="16" height="15" viewBox="0 0 16 15"><rect x="0" y="0" width="16" height="15" fill="#9a9a9a"/><rect x="6" y="2" width="4" height="11" fill="#b8b8b8"/><path d="M5.5 1 V14 M10.5 1 V14" stroke="#7a7a7a"/></svg>
<svg style="left:386px;top:880px;" width="15" height="15" viewBox="0 0 15 15"><path d="M1 1.5 L2 1 L2 5.5 M0.8 5.5 H3.2" stroke="#1a1a1a" stroke-width="1.1" fill="none"/><path d="M0.8 7 Q2 6 3 7 Q3.2 8 1 10 H3.3" stroke="#1a1a1a" stroke-width="1.1" fill="none"/><path d="M0.8 11.5 H3 L1.8 12.8 Q3.4 13 3.2 14.2 Q2.5 15.3 0.8 14.6" stroke="#1a1a1a" stroke-width="1.1" fill="none"/><path d="M5 2.5 H14 M5 7.5 H14 M5 12.6 H14" stroke="#1a1a1a" stroke-width="1.4"/></svg>
<svg style="left:407px;top:880px;" width="15" height="16" viewBox="0 0 15 16"><rect x="0.5" y="0.5" width="10.5" height="15" rx="1" fill="#e4e4e4" stroke="#8a8a8a"/><rect x="1.5" y="2" width="8.5" height="3" fill="#8c8c8c"/><path d="M2.5 7.5 H3.5 M5 7.5 H6 M7.5 7.5 H8.5 M2.5 10 H3.5 M5 10 H6 M7.5 10 H8.5 M2.5 12.5 H3.5 M5 12.5 H6" stroke="#7a7a7a" stroke-width="1.2"/><path d="M8.5 12.2 H14 M11.25 9.5 V15" stroke="#555" stroke-width="2.4"/></svg>
<svg style="left:425px;top:880px;" width="16" height="15" viewBox="0 0 16 15"><rect x="0.5" y="0.5" width="15" height="14" fill="#fafafa" stroke="#9a9a9a"/><path d="M2 3 H14 M2 5 H14 M2 7 H14 M2 9 H14" stroke="#e4e4e4"/><path d="M4.5 4 H11 V5 M4.5 4 L7.5 6.8 L4.5 9.5 H11 V8.5" stroke="#1a1a1a" stroke-width="1.5" fill="none"/><rect x="2" y="11" width="12" height="2.5" fill="#bdbdbd"/><path d="M5.5 11 V13.5 M10 11 V13.5" stroke="#f0f0f0" stroke-width="0.8"/></svg>
<svg style="left:450px;top:881px;" width="16" height="14" viewBox="0 0 16 14"><path d="M4 1 L13 0.5 L14.5 4 L3 5.5Z" fill="#e8e8e8" stroke="#666" stroke-width="0.9"/><path d="M5.5 2.5 L11 2.2" stroke="#999" stroke-width="0.8"/><path d="M1 6 L14 4 Q16 5 16 8 L16 11 Q16 13 14 13.5 L3 14 Q0.5 14 0.5 12 L0.5 8.5 Q0.5 6.5 1 6Z" fill="#6e6e6e"/><path d="M1.5 8 L15 7" stroke="#bdbdbd" stroke-width="1.4"/><path d="M2 10.5 L9 10.2" stroke="#f4f4f4" stroke-width="1.8"/></svg>
<svg style="left:471px;top:881px;" width="15" height="15" viewBox="0 0 15 15"><rect x="0.5" y="0.5" width="14" height="13.5" fill="#d4d4d4" stroke="#6e6e6e" stroke-width="1"/><rect x="2" y="2" width="11" height="8" fill="#ececec"/><path d="M3.5 3 L11.5 9 M11.5 3 L3.5 9" stroke="#6a706a" stroke-width="2.2"/><path d="M2 11.5 H13" stroke="#9a9a9a" stroke-width="1"/></svg>
<svg style="left:496px;top:880px;" width="16" height="16" viewBox="0 0 16 16"><rect x="1" y="1" width="13" height="13" fill="#fff" stroke="#111" stroke-width="1.8"/><rect x="2" y="2" width="11" height="3" fill="#d0d0d0"/><path d="M5.5 2 V13 M9.5 2 V13" stroke="#b0b0b0" stroke-width="2"/><rect x="8.5" y="8" width="7.5" height="7.5" rx="1.5" fill="#b8b8b8"/><path d="M10.3 9.8 L14.2 13.7 M14.2 9.8 L10.3 13.7" stroke="#fff" stroke-width="1.8"/></svg>
<div style="left:618px;top:878px;width:160px;height:21px;background:#e5f1fb;border:1px solid #0078d7"></div>
<div class="t" style="left:497px;width:400px;text-align:center;top:882px;font-size:11px;">Выбрать документы ТСД</div>
<div style="left:782px;top:171px;width:1px;height:733px;background:#c0c0c0"></div>
<div style="left:785px;top:171px;width:1px;height:733px;background:#c0c0c0"></div>
<div style="left:788px;top:187px;width:696px;height:713px;border:1px solid #d8d8d8;border-right:none"></div>
<div style="left:789px;top:188px;width:695px;height:2px;background:#fff"></div>
<div style="left:791px;top:760px;width:693px;height:112px;border:1px solid #828790;border-right:none;background:#fff"></div>
<div style="left:792px;top:761px;width:692px;height:94px;overflow:hidden;background:#fff">
<div style="left:0;top:14px;width:692px;height:1px;background:#808080"></div>
<div style="left:0;top:29px;width:692px;height:1px;background:#808080"></div>
<div style="left:0;top:44px;width:692px;height:1px;background:#808080"></div>
<div style="left:0;top:59px;width:692px;height:1px;background:#808080"></div>
<div style="left:0;top:74px;width:692px;height:1px;background:#808080"></div>
<div style="left:0;top:89px;width:692px;height:1px;background:#808080"></div>
<div style="left:0;top:104px;width:692px;height:1px;background:#808080"></div>
<div style="left:67px;top:0;width:1px;height:94px;background:#808080"></div>
<div style="left:123px;top:0;width:1px;height:94px;background:#808080"></div>
<div style="left:215px;top:0;width:1px;height:94px;background:#808080"></div>
<div style="left:578px;top:0;width:1px;height:94px;background:#808080"></div>
<div style="left:645px;top:0;width:1px;height:94px;background:#808080"></div>
<div class="t" style="left:2px;top:15px;font-size:11px;">29 2018-1...</div>
<div class="t" style="left:126px;top:15px;font-size:11px;">4810112007332</div>
<div class="t" style="left:218px;top:15px;font-size:11px;">Напиток ДАРИДА СНЕЖОК 1.45л</div>
<div class="t" style="right:49px;top:15px;font-size:11px;">1,77</div>
<div class="t" style="left:2px;top:30px;font-size:11px;">29 2018-1...</div>
<div class="t" style="left:126px;top:30px;font-size:11px;">4810112007349</div>
<div class="t" style="left:218px;top:30px;font-size:11px;">Напиток ДАРИДА КРЕМ-СОДА газ 1.45л</div>
<div class="t" style="right:49px;top:30px;font-size:11px;">1,77</div>
<div class="t" style="left:2px;top:45px;font-size:11px;">29 2018-1...</div>
<div class="t" style="left:126px;top:45px;font-size:11px;">4810285007252</div>
<div class="t" style="left:218px;top:45px;font-size:11px;">Пиво ЛИДСКОЕ PILSNER светлое паст 1л</div>
<div class="t" style="right:49px;top:45px;font-size:11px;">2,98</div>
<div class="t" style="left:2px;top:60px;font-size:11px;">29 2018-1...</div>
<div class="t" style="left:126px;top:60px;font-size:11px;">4810285009966</div>
<div class="t" style="left:218px;top:60px;font-size:11px;">Пиво ЛИДСКОЕ ст/б 0.5л</div>
<div class="t" style="right:49px;top:60px;font-size:11px;">1,72</div>
<div class="t" style="left:2px;top:75px;font-size:11px;">29 2018-1...</div>
<div class="t" style="left:126px;top:75px;font-size:11px;">5449000005489</div>
<div class="t" style="left:218px;top:75px;font-size:11px;">Вода питьевая BONAQUA негаз 1л</div>
<div class="t" style="right:49px;top:75px;font-size:11px;">1,18</div>
</div>
<div style="left:792px;top:855px;width:692px;height:16px;background:#f0f0f0"></div>
<div style="left:808px;top:856px;width:676px;height:14px;background:#cdcdcd"></div>
<svg style="left:797px;top:859px;" width="6" height="8" viewBox="0 0 6 8"><path d="M4.8 1 L1.8 4 L4.8 7" stroke="#4a4a4a" stroke-width="2" fill="none"/></svg>
<svg style="left:796px;top:878px;" width="12" height="16" viewBox="0 0 12 16"><path d="M0.3 0.5 L10.7 0.5 L6.8 5 L6.8 8 L4.3 8 L4.3 5 Z" fill="#fafafa" stroke="#2a3a3a" stroke-width="1.1"/><path d="M2.5 1.8 L5 4.8 M8.5 1.8 L6.3 4.5 M4.8 6.8 H6.3" stroke="#1a8080" stroke-width="1"/><path d="M9.4 8 V12.5 M7.1 10.3 H11.7" stroke="#333" stroke-width="1"/></svg>
<svg style="left:820px;top:877px;" width="16" height="15" viewBox="0 0 16 15"><rect x="0" y="0" width="16" height="15" fill="#9a9a9a"/><rect x="6" y="2" width="4" height="11" fill="#b8b8b8"/><path d="M5.5 1 V14 M10.5 1 V14" stroke="#7a7a7a"/></svg>
<svg style="left:841px;top:877px;" width="15" height="15" viewBox="0 0 15 15"><path d="M1 1.5 L2 1 L2 5.5 M0.8 5.5 H3.2" stroke="#1a1a1a" stroke-width="1.1" fill="none"/><path d="M0.8 7 Q2 6 3 7 Q3.2 8 1 10 H3.3" stroke="#1a1a1a" stroke-width="1.1" fill="none"/><path d="M0.8 11.5 H3 L1.8 12.8 Q3.4 13 3.2 14.2 Q2.5 15.3 0.8 14.6" stroke="#1a1a1a" stroke-width="1.1" fill="none"/><path d="M5 2.5 H14 M5 7.5 H14 M5 12.6 H14" stroke="#1a1a1a" stroke-width="1.4"/></svg>
<svg style="left:862px;top:877px;" width="15" height="16" viewBox="0 0 15 16"><rect x="0.5" y="0.5" width="10.5" height="15" rx="1" fill="#e4e4e4" stroke="#8a8a8a"/><rect x="1.5" y="2" width="8.5" height="3" fill="#8c8c8c"/><path d="M2.5 7.5 H3.5 M5 7.5 H6 M7.5 7.5 H8.5 M2.5 10 H3.5 M5 10 H6 M7.5 10 H8.5 M2.5 12.5 H3.5 M5 12.5 H6" stroke="#7a7a7a" stroke-width="1.2"/><path d="M8.5 12.2 H14 M11.25 9.5 V15" stroke="#555" stroke-width="2.4"/></svg>
<svg style="left:880px;top:877px;" width="16" height="15" viewBox="0 0 16 15"><rect x="0.5" y="0.5" width="15" height="14" fill="#fafafa" stroke="#9a9a9a"/><path d="M2 3 H14 M2 5 H14 M2 7 H14 M2 9 H14" stroke="#e4e4e4"/><path d="M4.5 4 H11 V5 M4.5 4 L7.5 6.8 L4.5 9.5 H11 V8.5" stroke="#1a1a1a" stroke-width="1.5" fill="none"/><rect x="2" y="11" width="12" height="2.5" fill="#bdbdbd"/><path d="M5.5 11 V13.5 M10 11 V13.5" stroke="#f0f0f0" stroke-width="0.8"/></svg>
<svg style="left:905px;top:878px;" width="16" height="14" viewBox="0 0 16 14"><path d="M4 1 L13 0.5 L14.5 4 L3 5.5Z" fill="#e8e8e8" stroke="#666" stroke-width="0.9"/><path d="M5.5 2.5 L11 2.2" stroke="#999" stroke-width="0.8"/><path d="M1 6 L14 4 Q16 5 16 8 L16 11 Q16 13 14 13.5 L3 14 Q0.5 14 0.5 12 L0.5 8.5 Q0.5 6.5 1 6Z" fill="#6e6e6e"/><path d="M1.5 8 L15 7" stroke="#bdbdbd" stroke-width="1.4"/><path d="M2 10.5 L9 10.2" stroke="#f4f4f4" stroke-width="1.8"/></svg>
<svg style="left:926px;top:878px;" width="15" height="15" viewBox="0 0 15 15"><rect x="0.5" y="0.5" width="14" height="13.5" fill="#d4d4d4" stroke="#6e6e6e" stroke-width="1"/><rect x="2" y="2" width="11" height="8" fill="#ececec"/><path d="M3.5 3 L11.5 9 M11.5 3 L3.5 9" stroke="#6a706a" stroke-width="2.2"/><path d="M2 11.5 H13" stroke="#9a9a9a" stroke-width="1"/></svg>
<svg style="left:951px;top:877px;" width="16" height="16" viewBox="0 0 16 16"><rect x="1" y="1" width="13" height="13" fill="#fff" stroke="#111" stroke-width="1.8"/><rect x="2" y="2" width="11" height="3" fill="#d0d0d0"/><path d="M5.5 2 V13 M9.5 2 V13" stroke="#b0b0b0" stroke-width="2"/><rect x="8.5" y="8" width="7.5" height="7.5" rx="1.5" fill="#b8b8b8"/><path d="M10.3 9.8 L14.2 13.7 M14.2 9.8 L10.3 13.7" stroke="#fff" stroke-width="1.8"/></svg>
<div style="left:1468px;top:196px;width:16px;height:1px;background:#d0d0d0"></div>
<div style="left:1468px;top:204px;width:16px;height:275px;border-top:1px solid #828790;background:#fff"></div>
<div style="left:1468px;top:239px;width:16px;height:14px;background:#a8ff12;border-top:1px solid #a8a8ff;border-bottom:1px solid #a8a8ff"></div>
<div style="left:1468px;top:268px;width:16px;height:1px;background:#808080"></div>
<div style="left:1468px;top:462px;width:16px;height:15px;background:#cdcdcd"></div>
<div style="left:1468px;top:477px;width:16px;height:1px;background:#828790"></div>
<div style="left:1468px;top:541px;width:16px;height:1px;background:#c8c8c8"></div>
<div style="left:1468px;top:546px;width:16px;height:150px;border-top:1px solid #828790;background:#fff"></div>
<div style="left:1468px;top:547px;width:16px;height:14px;background:#f0f0f0"></div>
<div class="t" style="left:1469px;top:569px;font-size:11px;">чес</div>
<div style="left:1468px;top:596px;width:16px;height:14px;background:#a8ff12;border-top:1px solid #a8a8ff;border-bottom:1px solid #a8a8ff"></div>
<div style="left:1468px;top:625px;width:16px;height:1px;background:#808080"></div>
<div style="left:1468px;top:640px;width:16px;height:1px;background:#808080"></div>
<div style="left:1468px;top:655px;width:16px;height:1px;background:#808080"></div>
<div style="left:1468px;top:670px;width:16px;height:1px;background:#808080"></div>
<div style="left:1468px;top:685px;width:16px;height:1px;background:#808080"></div>
<div style="left:1468px;top:700px;width:16px;height:1px;background:#808080"></div>
<div style="left:1468px;top:715px;width:16px;height:1px;background:#808080"></div>
<div style="left:1468px;top:730px;width:16px;height:1px;background:#808080"></div>
<div style="left:1468px;top:745px;width:16px;height:1px;background:#808080"></div>
<div style="left:1468px;top:760px;width:16px;height:1px;background:#808080"></div>
<div style="left:438px;top:169px;width:1030px;height:605px;background:#2e7b99"></div>
<div style="left:439px;top:200px;width:1028px;height:573px;background:#f0f0f0;border:1px solid #888"></div>
<div style="left:440px;top:201px;width:1px;height:571px;background:#fff"></div>
<svg style="left:447px;top:177px;" width="16" height="16" viewBox="0 0 16 16"><rect x="0" y="0" width="3.6" height="15" fill="#1bb0f2"/><rect x="0" y="11" width="7" height="4" fill="#1bb0f2"/><rect x="6" y="0" width="9" height="4" fill="#0b8fd6"/><rect x="6" y="6" width="9" height="3" fill="#2b2b2b"/><rect x="11.4" y="6" width="3.6" height="9" fill="#2b2b2b"/><rect x="8" y="11" width="7" height="4" fill="#2b2b2b"/></svg>
<div class="t" style="left:468px;top:178px;font-size:12px;color:#fff">Документы ТСД</div>
<svg style="left:1446px;top:178px;" width="12" height="12" viewBox="0 0 12 12"><path d="M1 1 L11 11 M11 1 L1 11" stroke="#fff" stroke-width="1.3"/></svg>
<div style="left:441px;top:206px;width:236px;height:29px;border:1px solid #dcdcdc;border-top-color:#dcdcdc"></div>
<div style="left:445px;top:203px;width:42px;height:8px;background:#f0f0f0"></div>
<div class="t" style="left:446px;top:200px;font-size:11px;">Фильтры</div>
<div class="t" style="left:444px;top:216px;font-size:11px;">Дата с</div>
<div style="left:480px;top:216px;width:73px;height:15px;background:#fff;border:1px solid #7a7a7a"></div>
<div class="t" style="right:934px;top:216px;font-size:11px;">23.10.18</div>
<svg style="left:548px;top:225px;" width="5" height="5" viewBox="0 0 5 5"><path d="M5 0 L5 5 L0 5Z" fill="#6a9ad0"/></svg>
<div class="t" style="left:557px;top:216px;font-size:11px;">Дата по</div>
<div style="left:600px;top:216px;width:73px;height:15px;background:#fff;border:1px solid #7a7a7a"></div>
<div class="t" style="right:814px;top:216px;font-size:11px;">30.10.18</div>
<svg style="left:668px;top:225px;" width="5" height="5" viewBox="0 0 5 5"><path d="M5 0 L5 5 L0 5Z" fill="#6a9ad0"/></svg>
<div style="left:441px;top:243px;width:1026px;height:1px;background:#dcdcdc"></div>
<div style="left:444px;top:236px;width:70px;height:12px;background:#f0f0f0"></div>
<div class="t" style="left:446px;top:236px;font-size:11px;">Документ ТСД</div>
<div style="left:442px;top:249px;width:1022px;height:145px;border:1px solid #828790;background:#f0f0f0"></div>
<div style="left:443px;top:250px;width:1003px;height:34px;background:#fff"></div>
<div style="left:467px;top:250px;width:1px;height:33px;background:#e5e5e5"></div>
<div style="left:534px;top:250px;width:1px;height:33px;background:#e5e5e5"></div>
<div style="left:586px;top:250px;width:1px;height:33px;background:#e5e5e5"></div>
<div style="left:638px;top:250px;width:1px;height:33px;background:#e5e5e5"></div>
<div style="left:706px;top:250px;width:1px;height:33px;background:#e5e5e5"></div>
<div style="left:834px;top:250px;width:1px;height:33px;background:#e5e5e5"></div>
<div style="left:962px;top:250px;width:1px;height:33px;background:#e5e5e5"></div>
<div style="left:1180px;top:250px;width:1px;height:33px;background:#e5e5e5"></div>
<div style="left:1398px;top:250px;width:1px;height:33px;background:#e5e5e5"></div>
<div style="left:443px;top:283px;width:1003px;height:1px;background:#ececec"></div>
<div class="t" style="left:448px;top:255px;font-size:11px;">Вкл.</div>
<div class="t" style="left:301px;width:400px;text-align:center;top:255px;font-size:11px;">Код</div>
<div class="t" style="left:541px;top:255px;font-size:11px;">Дата</div>
<div class="t" style="left:541px;top:268px;font-size:11px;">документ</div>
<div class="t" style="left:593px;top:255px;font-size:11px;">Время</div>
<div class="t" style="left:593px;top:268px;font-size:11px;">документ</div>
<div class="t" style="left:472px;width:400px;text-align:center;top:255px;font-size:11px;">Группа ТСД</div>
<div class="t" style="left:571px;width:400px;text-align:center;top:255px;font-size:11px;">Склад</div>
<div class="t" style="left:699px;width:400px;text-align:center;top:255px;font-size:11px;">Тип документа</div>
<div class="t" style="left:872px;width:400px;text-align:center;top:255px;font-size:11px;">Код в справочнике 1</div>
<div class="t" style="left:1090px;width:400px;text-align:center;top:255px;font-size:11px;">Код в справочнике 2</div>
<svg style="left:462px;top:277px;" width="5" height="5" viewBox="0 0 5 5"><path d="M5 0 L5 5 L0 5Z" fill="#6a9ad0"/></svg>
<div style="left:443px;top:284px;width:1003px;height:93px;overflow:hidden;background:#fff">
<div style="left:0;top:14px;width:1003px;height:1px;background:#808080"></div>
<div style="left:0;top:29px;width:1003px;height:1px;background:#808080"></div>
<div style="left:0;top:44px;width:1003px;height:1px;background:#808080"></div>
<div style="left:0;top:59px;width:1003px;height:1px;background:#808080"></div>
<div style="left:0;top:74px;width:1003px;height:1px;background:#808080"></div>
<div style="left:0;top:74px;width:1003px;height:1px;background:#808080"></div>
<div style="left:0;top:75px;width:1003px;height:14px;background:#a8ff12;border-top:1px solid #a8a8ff;border-bottom:1px solid #a8a8ff"></div>
<div style="left:0;top:89px;width:1003px;height:1px;background:#808080"></div>
<div style="left:0;top:104px;width:1003px;height:1px;background:#808080"></div>
<div style="left:25px;top:0;width:1px;height:93px;background:#808080"></div>
<div style="left:92px;top:0;width:1px;height:93px;background:#808080"></div>
<div style="left:144px;top:0;width:1px;height:93px;background:#808080"></div>
<div style="left:196px;top:0;width:1px;height:93px;background:#808080"></div>
<div style="left:264px;top:0;width:1px;height:93px;background:#808080"></div>
<div style="left:392px;top:0;width:1px;height:93px;background:#808080"></div>
<div style="left:520px;top:0;width:1px;height:93px;background:#808080"></div>
<div style="left:738px;top:0;width:1px;height:93px;background:#808080"></div>
<div style="left:956px;top:0;width:1px;height:93px;background:#808080"></div>
<div class="t" style="left:28px;top:0px;font-size:11px;">29 2018-1...</div>
<div class="t" style="left:98px;top:0px;font-size:11px;">30.10.18</div>
<div class="t" style="left:151px;top:0px;font-size:11px;">10:02:48</div>
<div class="t" style="left:199px;top:0px;font-size:11px;color:#707070;">Не опред...</div>
<div class="t" style="left:267px;top:0px;font-size:11px;">Магазин &quot;Эконом&quot;</div>
<div class="t" style="left:395px;top:0px;font-size:11px;">Инвентаризация</div>
<div class="t" style="left:523px;top:0px;font-size:11px;">ЗН1</div>
<div class="t" style="left:741px;top:0px;font-size:11px;">КМ1</div>
<div class="t" style="left:959px;top:0px;font-size:11px;">29</div>
<div class="t" style="left:28px;top:15px;font-size:11px;">30 2018-1...</div>
<div class="t" style="left:98px;top:15px;font-size:11px;">30.10.18</div>
<div class="t" style="left:151px;top:15px;font-size:11px;">10:07:56</div>
<div class="t" style="left:199px;top:15px;font-size:11px;color:#707070;">Не опред...</div>
<div class="t" style="left:267px;top:15px;font-size:11px;">Магазин &quot;Эконом&quot;</div>
<div class="t" style="left:395px;top:15px;font-size:11px;">Инвентаризация</div>
<div class="t" style="left:523px;top:15px;font-size:11px;">ЗН1</div>
<div class="t" style="left:741px;top:15px;font-size:11px;">КМ2</div>
<div class="t" style="left:959px;top:15px;font-size:11px;">30</div>
<div class="t" style="left:28px;top:30px;font-size:11px;">27 2018-1...</div>
<div class="t" style="left:98px;top:30px;font-size:11px;">30.10.18</div>
<div class="t" style="left:151px;top:30px;font-size:11px;">10:56:11</div>
<div class="t" style="left:199px;top:30px;font-size:11px;color:#707070;">Не опред...</div>
<div class="t" style="left:267px;top:30px;font-size:11px;">Магазин &quot;Эконом&quot;</div>
<div class="t" style="left:395px;top:30px;font-size:11px;">Инвентаризация</div>
<div class="t" style="left:523px;top:30px;font-size:11px;">ЗН2</div>
<div class="t" style="left:741px;top:30px;font-size:11px;">КМ1</div>
<div class="t" style="left:959px;top:30px;font-size:11px;">27</div>
<div class="t" style="left:28px;top:45px;font-size:11px;">34 2018-1...</div>
<div class="t" style="left:98px;top:45px;font-size:11px;">30.10.18</div>
<div class="t" style="left:151px;top:45px;font-size:11px;">11:14:37</div>
<div class="t" style="left:199px;top:45px;font-size:11px;color:#707070;">Не опред...</div>
<div class="t" style="left:267px;top:45px;font-size:11px;">Магазин &quot;Эконом&quot;</div>
<div class="t" style="left:395px;top:45px;font-size:11px;">Инвентаризация</div>
<div class="t" style="left:523px;top:45px;font-size:11px;">ЗН10</div>
<div class="t" style="left:741px;top:45px;font-size:11px;">КМ2</div>
<div class="t" style="left:959px;top:45px;font-size:11px;">34</div>
<div class="t" style="left:28px;top:60px;font-size:11px;">28 2018-1...</div>
<div class="t" style="left:98px;top:60px;font-size:11px;">30.10.18</div>
<div class="t" style="left:151px;top:60px;font-size:11px;">11:16:23</div>
<div class="t" style="left:199px;top:60px;font-size:11px;color:#707070;">Не опред...</div>
<div class="t" style="left:267px;top:60px;font-size:11px;">Магазин &quot;Эконом&quot;</div>
<div class="t" style="left:395px;top:60px;font-size:11px;">Инвентаризация</div>
<div class="t" style="left:523px;top:60px;font-size:11px;">ЗН2</div>
<div class="t" style="left:741px;top:60px;font-size:11px;">КМ2</div>
<div class="t" style="left:959px;top:60px;font-size:11px;">28</div>
<div class="t" style="left:28px;top:75px;font-size:11px;">31 2018-1...</div>
<div class="t" style="left:98px;top:75px;font-size:11px;">30.10.18</div>
<div class="t" style="left:151px;top:75px;font-size:11px;">11:36:12</div>
<div class="t" style="left:199px;top:75px;font-size:11px;color:#707070;">Не опред...</div>
<div class="t" style="left:267px;top:75px;font-size:11px;">Магазин &quot;Эконом&quot;</div>
<div class="t" style="left:395px;top:75px;font-size:11px;">Инвентаризация</div>
<div class="t" style="left:523px;top:75px;font-size:11px;">ЗН3</div>
<div class="t" style="left:741px;top:75px;font-size:11px;">КМ1</div>
<div class="t" style="left:959px;top:75px;font-size:11px;">31</div>
</div>
<div style="left:836px;top:299px;width:127px;height:14px;background:#e8e8f2"></div>
<div class="t" style="left:838px;top:299px;font-size:11px;">Инвентаризация</div>
<div style="left:835px;top:359px;width:128px;height:14px;background:#e8e8f2;border:1px solid #5a5ae0"></div>
<div class="t" style="left:838px;top:359px;font-size:11px;">Инвентаризация</div>
<svg style="left:449px;top:285px;" width="13" height="13" viewBox="0 0 13 13"><rect x="0.5" y="0.5" width="12" height="12" fill="#fff" stroke="#333"/><path d="M2.5 6.5 L5 9.5 L10.5 3.5" stroke="#333" stroke-width="1.2" fill="none"/></svg>
<svg style="left:449px;top:300px;" width="13" height="13" viewBox="0 0 13 13"><rect x="0.5" y="0.5" width="12" height="12" fill="#fff" stroke="#333"/><path d="M2.5 6.5 L5 9.5 L10.5 3.5" stroke="#333" stroke-width="1.2" fill="none"/></svg>
<svg style="left:449px;top:315px;" width="13" height="13" viewBox="0 0 13 13"><rect x="0.5" y="0.5" width="12" height="12" fill="#fff" stroke="#333"/><path d="M2.5 6.5 L5 9.5 L10.5 3.5" stroke="#333" stroke-width="1.2" fill="none"/></svg>
<svg style="left:449px;top:330px;" width="13" height="13" viewBox="0 0 13 13"><rect x="0.5" y="0.5" width="12" height="12" fill="#fff" stroke="#333"/><path d="M2.5 6.5 L5 9.5 L10.5 3.5" stroke="#333" stroke-width="1.2" fill="none"/></svg>
<svg style="left:449px;top:345px;" width="13" height="13" viewBox="0 0 13 13"><rect x="0.5" y="0.5" width="12" height="12" fill="#fff" stroke="#333"/><path d="M2.5 6.5 L5 9.5 L10.5 3.5" stroke="#333" stroke-width="1.2" fill="none"/></svg>
<svg style="left:449px;top:360px;" width="13" height="13" viewBox="0 0 13 13"><rect x="0.5" y="0.5" width="12" height="12" fill="#fff" stroke="#333"/><path d="M2.5 6.5 L5 9.5 L10.5 3.5" stroke="#333" stroke-width="1.2" fill="none"/></svg>
<div style="left:449px;top:375px;width:13px;height:3px;border:1px solid #333;border-bottom:none;background:#fff"></div>
<div style="left:1446px;top:284px;width:17px;height:93px;background:#f0f0f0"></div>
<div style="left:1447px;top:312px;width:15px;height:16px;background:#cdcdcd"></div>
<svg style="left:1450px;top:289px;" width="9" height="6" viewBox="0 0 9 6"><path d="M1 5 L4.5 1.5 L8 5" stroke="#5a5a5a" stroke-width="2" fill="none"/></svg>
<svg style="left:1450px;top:364px;" width="9" height="6" viewBox="0 0 9 6"><path d="M1 1 L4.5 4.5 L8 1" stroke="#5a5a5a" stroke-width="2" fill="none"/></svg>
<div style="left:443px;top:377px;width:1003px;height:16px;background:#f0f0f0"></div>
<div style="left:460px;top:378px;width:697px;height:14px;background:#cdcdcd"></div>
<svg style="left:446px;top:381px;" width="6" height="8" viewBox="0 0 6 8"><path d="M4.8 1 L1.8 4 L4.8 7" stroke="#4a4a4a" stroke-width="2" fill="none"/></svg>
<svg style="left:1434px;top:381px;" width="6" height="8" viewBox="0 0 6 8"><path d="M1.2 1 L4.2 4 L1.2 7" stroke="#4a4a4a" stroke-width="2" fill="none"/></svg>
<div style="left:1389px;top:400px;width:13px;height:13px;background:#fff;border:1px solid #333"></div>
<div class="t" style="left:1405px;top:400px;font-size:11px;">Отм. (F10)</div>
<svg style="left:447px;top:400px;" width="13" height="14" viewBox="0 0 13 14"><rect x="0.5" y="1.5" width="13" height="6" fill="#fff" stroke="#8c8ad6" stroke-width="1"/><path d="M0.5 4 V7.5 M13.5 4 V7.5" stroke="#78c4bc"/><rect x="2.5" y="3.5" width="9" height="2.5" fill="#c8c6f4"/><path d="M6.5 5 L11 10 L8 10 L8 14 L5 14 L5 10 L2 10 Z" fill="#6866a8"/><path d="M5 12 L8 12 L8 14 L5 14Z" fill="#4a9a98"/></svg>
<svg style="left:471px;top:399px;" width="16" height="15" viewBox="0 0 16 15"><rect x="0.5" y="0.5" width="15" height="14" rx="1.5" fill="#fff" stroke="#8e8e8e"/><rect x="2" y="2" width="12" height="10.5" fill="#b4b4b4"/><path d="M3 3.5 H6 M3 6 H6 M3 8.5 H6 M3 11 H6 M10.5 3.5 H13 M10.5 6 H13 M10.5 8.5 H13 M10.5 11 H13" stroke="#fff" stroke-width="1" stroke-dasharray="1 1"/><rect x="7" y="2" width="3" height="10.5" fill="#3a3a3a"/><rect x="8" y="3" width="1" height="8.5" fill="#9a9a9a"/></svg>
<svg style="left:492px;top:399px;" width="15" height="15" viewBox="0 0 15 15"><path d="M1 1.5 L2 1 L2 5.5 M0.8 5.5 H3.2" stroke="#1a1a1a" stroke-width="1.1" fill="none"/><path d="M0.8 7 Q2 6 3 7 Q3.2 8 1 10 H3.3" stroke="#1a1a1a" stroke-width="1.1" fill="none"/><path d="M0.8 11.5 H3 L1.8 12.8 Q3.4 13 3.2 14.2 Q2.5 15.3 0.8 14.6" stroke="#1a1a1a" stroke-width="1.1" fill="none"/><path d="M5 2.5 H14 M5 7.5 H14 M5 12.6 H14" stroke="#1a1a1a" stroke-width="1.4"/></svg>
<svg style="left:513px;top:399px;" width="15" height="16" viewBox="0 0 15 16"><rect x="0.5" y="0.5" width="10.5" height="15" rx="1" fill="#e4e4e4" stroke="#8a8a8a"/><rect x="1.5" y="2" width="8.5" height="3" fill="#8c8c8c"/><path d="M2.5 7.5 H3.5 M5 7.5 H6 M7.5 7.5 H8.5 M2.5 10 H3.5 M5 10 H6 M7.5 10 H8.5 M2.5 12.5 H3.5 M5 12.5 H6" stroke="#7a7a7a" stroke-width="1.2"/><path d="M8.5 12.2 H14 M11.25 9.5 V15" stroke="#555" stroke-width="2.4"/></svg>
<svg style="left:531px;top:399px;" width="16" height="15" viewBox="0 0 16 15"><rect x="0.5" y="0.5" width="15" height="14" fill="#fafafa" stroke="#9a9a9a"/><path d="M2 3 H14 M2 5 H14 M2 7 H14 M2 9 H14" stroke="#e4e4e4"/><path d="M4.5 4 H11 V5 M4.5 4 L7.5 6.8 L4.5 9.5 H11 V8.5" stroke="#1a1a1a" stroke-width="1.5" fill="none"/><rect x="2" y="11" width="12" height="2.5" fill="#bdbdbd"/><path d="M5.5 11 V13.5 M10 11 V13.5" stroke="#f0f0f0" stroke-width="0.8"/></svg>
<svg style="left:556px;top:400px;" width="16" height="14" viewBox="0 0 16 14"><path d="M4 1 L13 0.5 L14.5 4 L3 5.5Z" fill="#e8e8e8" stroke="#666" stroke-width="0.9"/><path d="M5.5 2.5 L11 2.2" stroke="#999" stroke-width="0.8"/><path d="M1 6 L14 4 Q16 5 16 8 L16 11 Q16 13 14 13.5 L3 14 Q0.5 14 0.5 12 L0.5 8.5 Q0.5 6.5 1 6Z" fill="#6e6e6e"/><path d="M1.5 8 L15 7" stroke="#bdbdbd" stroke-width="1.4"/><path d="M2 10.5 L9 10.2" stroke="#f4f4f4" stroke-width="1.8"/></svg>
<svg style="left:577px;top:400px;" width="15" height="15" viewBox="0 0 15 15"><rect x="0.5" y="0.5" width="14" height="13.5" fill="#d4d4d4" stroke="#6e6e6e" stroke-width="1"/><rect x="2" y="2" width="11" height="8" fill="#ececec"/><path d="M3.5 3 L11.5 9 M11.5 3 L3.5 9" stroke="#6a706a" stroke-width="2.2"/><path d="M2 11.5 H13" stroke="#9a9a9a" stroke-width="1"/></svg>
<svg style="left:602px;top:399px;" width="16" height="16" viewBox="0 0 16 16"><rect x="1" y="1" width="13" height="13" fill="#fff" stroke="#111" stroke-width="1.8"/><rect x="2" y="2" width="11" height="3" fill="#d0d0d0"/><path d="M5.5 2 V13 M9.5 2 V13" stroke="#b0b0b0" stroke-width="2"/><rect x="8.5" y="8" width="7.5" height="7.5" rx="1.5" fill="#b8b8b8"/><path d="M10.3 9.8 L14.2 13.7 M14.2 9.8 L10.3 13.7" stroke="#fff" stroke-width="1.8"/></svg>
<svg style="left:447px;top:423px;" width="12" height="16" viewBox="0 0 12 16"><path d="M0.3 0.5 L10.7 0.5 L6.8 5 L6.8 8 L4.3 8 L4.3 5 Z" fill="#fafafa" stroke="#2a3a3a" stroke-width="1.1"/><path d="M2.5 1.8 L5 4.8 M8.5 1.8 L6.3 4.5 M4.8 6.8 H6.3" stroke="#1a8080" stroke-width="1"/><path d="M9.4 8 V12.5 M7.1 10.3 H11.7" stroke="#333" stroke-width="1"/></svg>
<div style="left:442px;top:439px;width:183px;height:17px;background:#e5e5e5;border:1px solid #adadad"></div>
<div class="t" style="left:445px;top:440px;font-size:11px;">Тип документа (82807)</div>
<svg style="left:612px;top:447px;" width="9" height="5" viewBox="0 0 9 5"><path d="M0.5 0.5 L4.5 4.5 L8.5 0.5" stroke="#444" stroke-width="1.1" fill="none"/></svg>
<div style="left:629px;top:441px;width:13px;height:13px;background:#fff;border:1px solid #333"></div>
<div class="t" style="left:645px;top:441px;font-size:11px;">НЕ</div>
<div style="left:664px;top:439px;width:117px;height:17px;background:#e5e5e5;border:1px solid #adadad"></div>
<div class="t" style="left:667px;top:440px;font-size:11px;">=</div>
<svg style="left:768px;top:447px;" width="9" height="5" viewBox="0 0 9 5"><path d="M0.5 0.5 L4.5 4.5 L8.5 0.5" stroke="#444" stroke-width="1.1" fill="none"/></svg>
<div style="left:781px;top:439px;width:73px;height:17px;background:#e5e5e5;border:1px solid #adadad"></div>
<div class="t" style="left:784px;top:440px;font-size:11px;">Значение</div>
<svg style="left:841px;top:447px;" width="9" height="5" viewBox="0 0 9 5"><path d="M0.5 0.5 L4.5 4.5 L8.5 0.5" stroke="#444" stroke-width="1.1" fill="none"/></svg>
<div style="left:854px;top:440px;width:128px;height:15px;background:#fff;border:1px solid #7a7a7a"></div>
<div class="t" style="left:856px;top:441px;font-size:11px;">Инвентаризация</div>
<svg style="left:987px;top:444px;" width="7" height="7" viewBox="0 0 7 7"><path d="M1 1 L6 6 M6 1 L1 6" stroke="#e04020" stroke-width="2"/></svg>
<div style="left:442px;top:462px;width:396px;height:29px;border:1px solid #dcdcdc"></div>
<div style="left:446px;top:456px;width:40px;height:12px;background:#f0f0f0"></div>
<div class="t" style="left:449px;top:456px;font-size:11px;">Создан</div>
<div class="t" style="left:446px;top:472px;font-size:11px;">Создан пользователем</div>
<div style="left:565px;top:472px;width:68px;height:15px;background:#fff;border:1px solid #7a7a7a"></div>
<div class="t" style="left:568px;top:472px;font-size:11px;">tsd01</div>
<div class="t" style="left:640px;top:472px;font-size:11px;">Время создания</div>
<div style="left:723px;top:472px;width:100px;height:15px;background:#fff;border:1px solid #7a7a7a"></div>
<div class="t" style="left:726px;top:472px;font-size:11px;">30.10.18 11:36:12</div>
<div style="left:440px;top:493px;width:1026px;height:1px;background:#dcdcdc"></div>
<div style="left:440px;top:495px;width:1026px;height:1px;background:#a0a0a0"></div>
<div style="left:440px;top:498px;width:1026px;height:1px;background:#a0a0a0"></div>
<div style="left:440px;top:496px;width:1026px;height:2px;background:#fafafa"></div>
<div style="left:441px;top:506px;width:1026px;height:1px;background:#dcdcdc"></div>
<div style="left:444px;top:502px;width:126px;height:9px;background:#f0f0f0"></div>
<div class="t" style="left:446px;top:499px;font-size:11px;">Строка документа ТСД</div>
<div style="left:442px;top:513px;width:1022px;height:200px;border:1px solid #828790;background:#f0f0f0"></div>
<div style="left:443px;top:514px;width:1003px;height:34px;background:#fff"></div>
<div style="left:509px;top:514px;width:1px;height:33px;background:#e5e5e5"></div>
<div style="left:565px;top:514px;width:1px;height:33px;background:#e5e5e5"></div>
<div style="left:657px;top:514px;width:1px;height:33px;background:#e5e5e5"></div>
<div style="left:1019px;top:514px;width:1px;height:33px;background:#e5e5e5"></div>
<div style="left:1087px;top:514px;width:1px;height:33px;background:#e5e5e5"></div>
<div style="left:1155px;top:514px;width:1px;height:33px;background:#e5e5e5"></div>
<div style="left:1223px;top:514px;width:1px;height:33px;background:#e5e5e5"></div>
<div style="left:1441px;top:514px;width:1px;height:33px;background:#e5e5e5"></div>
<div class="t" style="left:276px;width:400px;text-align:center;top:519px;font-size:11px;">Код</div>
<div class="t" style="left:338px;width:400px;text-align:center;top:519px;font-size:11px;">Номер</div>
<div class="t" style="left:412px;width:400px;text-align:center;top:519px;font-size:11px;">Штрихкод</div>
<div class="t" style="left:639px;width:400px;text-align:center;top:519px;font-size:11px;">Наименование</div>
<div class="t" style="left:854px;width:400px;text-align:center;top:519px;font-size:11px;">Цена</div>
<div class="t" style="left:922px;width:400px;text-align:center;top:519px;font-size:11px;">Количество</div>
<div class="t" style="left:990px;width:400px;text-align:center;top:519px;font-size:11px;">Сумма</div>
<div class="t" style="left:1133px;width:400px;text-align:center;top:519px;font-size:11px;">Комментарий</div>
<div style="left:443px;top:548px;width:1003px;height:148px;overflow:hidden;background:#fff">
<div style="left:0;top:-1px;width:1003px;height:1px;background:#808080"></div>
<div style="left:0;top:0px;width:1003px;height:14px;background:#a8ff12;border-top:1px solid #a8a8ff;border-bottom:1px solid #a8a8ff"></div>
<div style="left:0;top:14px;width:1003px;height:1px;background:#808080"></div>
<div style="left:0;top:29px;width:1003px;height:1px;background:#808080"></div>
<div style="left:0;top:44px;width:1003px;height:1px;background:#808080"></div>
<div style="left:0;top:59px;width:1003px;height:1px;background:#808080"></div>
<div style="left:0;top:74px;width:1003px;height:1px;background:#808080"></div>
<div style="left:0;top:89px;width:1003px;height:1px;background:#808080"></div>
<div style="left:0;top:104px;width:1003px;height:1px;background:#808080"></div>
<div style="left:0;top:119px;width:1003px;height:1px;background:#808080"></div>
<div style="left:0;top:134px;width:1003px;height:1px;background:#808080"></div>
<div style="left:0;top:149px;width:1003px;height:1px;background:#808080"></div>
<div style="left:67px;top:0;width:1px;height:148px;background:#808080"></div>
<div style="left:123px;top:0;width:1px;height:148px;background:#808080"></div>
<div style="left:215px;top:0;width:1px;height:148px;background:#808080"></div>
<div style="left:577px;top:0;width:1px;height:148px;background:#808080"></div>
<div style="left:645px;top:0;width:1px;height:148px;background:#808080"></div>
<div style="left:713px;top:0;width:1px;height:148px;background:#808080"></div>
<div style="left:781px;top:0;width:1px;height:148px;background:#808080"></div>
<div style="left:999px;top:0;width:1px;height:148px;background:#808080"></div>
<div class="t" style="left:2px;top:0px;font-size:11px;">31 2018-1...</div>
<div class="t" style="left:126px;top:0px;font-size:11px;">4810263032948</div>
<div class="t" style="left:218px;top:0px;font-size:11px;">Смесь сухая БЕЛЛАКТ ГА 3+ 300 гр</div>
<div class="t" style="right:360px;top:0px;font-size:11px;">7,26</div>
<div class="t" style="right:292px;top:0px;font-size:11px;">3</div>
<div class="t" style="right:224px;top:0px;font-size:11px;">21,78</div>
<div class="t" style="left:784px;top:0px;font-size:11px;color:#707070;">Не определено</div>
<div class="t" style="left:2px;top:15px;font-size:11px;">31 2018-1...</div>
<div class="t" style="left:126px;top:15px;font-size:11px;">4810263026848</div>
<div class="t" style="left:218px;top:15px;font-size:11px;">Напиток сухой молочный БЕЛЛАКТ ИММУНИС 3+ 400г</div>
<div class="t" style="right:360px;top:15px;font-size:11px;">4,44</div>
<div class="t" style="right:292px;top:15px;font-size:11px;">5</div>
<div class="t" style="right:224px;top:15px;font-size:11px;">22,2</div>
<div class="t" style="left:784px;top:15px;font-size:11px;color:#707070;">Не определено</div>
<div class="t" style="left:2px;top:30px;font-size:11px;">31 2018-1...</div>
<div class="t" style="left:126px;top:30px;font-size:11px;">4810263030050</div>
<div class="t" style="left:218px;top:30px;font-size:11px;">Смесь сухая БЕЛЛАКТ ГА 1+ д/п 350г</div>
<div class="t" style="right:360px;top:30px;font-size:11px;">7,84</div>
<div class="t" style="right:292px;top:30px;font-size:11px;">8</div>
<div class="t" style="right:224px;top:30px;font-size:11px;">62,72</div>
<div class="t" style="left:784px;top:30px;font-size:11px;color:#707070;">Не определено</div>
<div class="t" style="left:2px;top:45px;font-size:11px;">31 2018-1...</div>
<div class="t" style="left:126px;top:45px;font-size:11px;">4820003689189</div>
<div class="t" style="left:218px;top:45px;font-size:11px;">Сок ОДЕССКИЙ томатный с солью 1.93л т/п</div>
<div class="t" style="right:360px;top:45px;font-size:11px;">2,89</div>
<div class="t" style="right:292px;top:45px;font-size:11px;">1</div>
<div class="t" style="right:224px;top:45px;font-size:11px;">2,89</div>
<div class="t" style="left:784px;top:45px;font-size:11px;color:#707070;">Не определено</div>
<div class="t" style="left:2px;top:60px;font-size:11px;">31 2018-1...</div>
<div class="t" style="left:126px;top:60px;font-size:11px;">4601159072991</div>
<div class="t" style="left:218px;top:60px;font-size:11px;transform:scaleX(0.948);transform-origin:0 0">ХЛОПЬЯ ОВСЯН КАШКА-МИНУТКА ЭКЗОТИК 1/185 РФ</div>
<div class="t" style="right:360px;top:60px;font-size:11px;">0</div>
<div class="t" style="right:292px;top:60px;font-size:11px;">0</div>
<div class="t" style="right:224px;top:60px;font-size:11px;">0</div>
<div class="t" style="left:784px;top:60px;font-size:11px;color:#707070;">Не определено</div>
<div class="t" style="left:2px;top:75px;font-size:11px;">31 2018-1...</div>
<div class="t" style="left:126px;top:75px;font-size:11px;">4601159073356</div>
<div class="t" style="left:218px;top:75px;font-size:11px;transform:scaleX(0.927);transform-origin:0 0">ХЛОПЬЯ ОВСЯНЫЕ Б/ПР КАШКА МИНУТКА С ЧЕРНИКОЙ СО СЛИВОЧ...</div>
<div class="t" style="right:360px;top:75px;font-size:11px;">0,6</div>
<div class="t" style="right:292px;top:75px;font-size:11px;">31</div>
<div class="t" style="right:224px;top:75px;font-size:11px;">18,6</div>
<div class="t" style="left:784px;top:75px;font-size:11px;color:#707070;">Не определено</div>
<div class="t" style="left:2px;top:90px;font-size:11px;">31 2018-1...</div>
<div class="t" style="left:126px;top:90px;font-size:11px;">4601159072939</div>
<div class="t" style="left:218px;top:90px;font-size:11px;">Хлопья овсяные быстрого пригот экзотик Кашка-минутка 37г</div>
<div class="t" style="right:360px;top:90px;font-size:11px;">0,55</div>
<div class="t" style="right:292px;top:90px;font-size:11px;">31</div>
<div class="t" style="right:224px;top:90px;font-size:11px;">17,05</div>
<div class="t" style="left:784px;top:90px;font-size:11px;color:#707070;">Не определено</div>
<div class="t" style="left:2px;top:105px;font-size:11px;">31 2018-1...</div>
<div class="t" style="left:126px;top:105px;font-size:11px;">4811892002579</div>
<div class="t" style="left:218px;top:105px;font-size:11px;">Крахмал картофельный фермер в/с 500г</div>
<div class="t" style="right:360px;top:105px;font-size:11px;">0</div>
<div class="t" style="right:292px;top:105px;font-size:11px;">12</div>
<div class="t" style="right:224px;top:105px;font-size:11px;">0</div>
<div class="t" style="left:784px;top:105px;font-size:11px;color:#707070;">Не определено</div>
<div class="t" style="left:2px;top:120px;font-size:11px;">31 2018-1...</div>
<div class="t" style="left:126px;top:120px;font-size:11px;">4814730000096</div>
<div class="t" style="left:218px;top:120px;font-size:11px;">Горох целый шлифованный 1 сорт 700г</div>
<div class="t" style="right:360px;top:120px;font-size:11px;">1,08</div>
<div class="t" style="right:292px;top:120px;font-size:11px;">20</div>
<div class="t" style="right:224px;top:120px;font-size:11px;">21,6</div>
<div class="t" style="left:784px;top:120px;font-size:11px;color:#707070;">Не определено</div>
<div class="t" style="left:2px;top:135px;font-size:11px;">31 2018-1...</div>
<div class="t" style="left:126px;top:135px;font-size:11px;">4810721000038</div>
<div class="t" style="left:218px;top:135px;font-size:11px;">Лимонная кислота 100г</div>
<div class="t" style="right:360px;top:135px;font-size:11px;">0,9</div>
<div class="t" style="right:292px;top:135px;font-size:11px;">34</div>
<div class="t" style="right:224px;top:135px;font-size:11px;">30,6</div>
<div class="t" style="left:784px;top:135px;font-size:11px;color:#707070;">Не определено</div>
</div>
<div style="left:1446px;top:548px;width:17px;height:148px;background:#f0f0f0"></div>
<div style="left:1447px;top:565px;width:15px;height:23px;background:#cdcdcd"></div>
<svg style="left:1450px;top:553px;" width="9" height="6" viewBox="0 0 9 6"><path d="M1 5 L4.5 1.5 L8 5" stroke="#5a5a5a" stroke-width="2" fill="none"/></svg>
<svg style="left:1450px;top:684px;" width="9" height="6" viewBox="0 0 9 6"><path d="M1 1 L4.5 4.5 L8 1" stroke="#5a5a5a" stroke-width="2" fill="none"/></svg>
<div style="left:443px;top:696px;width:1003px;height:16px;background:#f0f0f0"></div>
<div style="left:460px;top:697px;width:884px;height:14px;background:#cdcdcd"></div>
<svg style="left:446px;top:700px;" width="6" height="8" viewBox="0 0 6 8"><path d="M4.8 1 L1.8 4 L4.8 7" stroke="#4a4a4a" stroke-width="2" fill="none"/></svg>
<svg style="left:1434px;top:700px;" width="6" height="8" viewBox="0 0 6 8"><path d="M1.2 1 L4.2 4 L1.2 7" stroke="#4a4a4a" stroke-width="2" fill="none"/></svg>
<svg style="left:447px;top:719px;" width="12" height="16" viewBox="0 0 12 16"><path d="M0.3 0.5 L10.7 0.5 L6.8 5 L6.8 8 L4.3 8 L4.3 5 Z" fill="#fafafa" stroke="#2a3a3a" stroke-width="1.1"/><path d="M2.5 1.8 L5 4.8 M8.5 1.8 L6.3 4.5 M4.8 6.8 H6.3" stroke="#1a8080" stroke-width="1"/><path d="M9.4 8 V12.5 M7.1 10.3 H11.7" stroke="#333" stroke-width="1"/></svg>
<svg style="left:471px;top:718px;" width="16" height="15" viewBox="0 0 16 15"><rect x="0" y="0" width="16" height="15" fill="#9a9a9a"/><rect x="6" y="2" width="4" height="11" fill="#b8b8b8"/><path d="M5.5 1 V14 M10.5 1 V14" stroke="#7a7a7a"/></svg>
<svg style="left:492px;top:718px;" width="15" height="15" viewBox="0 0 15 15"><path d="M1 1.5 L2 1 L2 5.5 M0.8 5.5 H3.2" stroke="#1a1a1a" stroke-width="1.1" fill="none"/><path d="M0.8 7 Q2 6 3 7 Q3.2 8 1 10 H3.3" stroke="#1a1a1a" stroke-width="1.1" fill="none"/><path d="M0.8 11.5 H3 L1.8 12.8 Q3.4 13 3.2 14.2 Q2.5 15.3 0.8 14.6" stroke="#1a1a1a" stroke-width="1.1" fill="none"/><path d="M5 2.5 H14 M5 7.5 H14 M5 12.6 H14" stroke="#1a1a1a" stroke-width="1.4"/></svg>
<svg style="left:513px;top:718px;" width="15" height="16" viewBox="0 0 15 16"><rect x="0.5" y="0.5" width="10.5" height="15" rx="1" fill="#e4e4e4" stroke="#8a8a8a"/><rect x="1.5" y="2" width="8.5" height="3" fill="#8c8c8c"/><path d="M2.5 7.5 H3.5 M5 7.5 H6 M7.5 7.5 H8.5 M2.5 10 H3.5 M5 10 H6 M7.5 10 H8.5 M2.5 12.5 H3.5 M5 12.5 H6" stroke="#7a7a7a" stroke-width="1.2"/><path d="M8.5 12.2 H14 M11.25 9.5 V15" stroke="#555" stroke-width="2.4"/></svg>
<svg style="left:531px;top:718px;" width="16" height="15" viewBox="0 0 16 15"><rect x="0.5" y="0.5" width="15" height="14" fill="#fafafa" stroke="#9a9a9a"/><path d="M2 3 H14 M2 5 H14 M2 7 H14 M2 9 H14" stroke="#e4e4e4"/><path d="M4.5 4 H11 V5 M4.5 4 L7.5 6.8 L4.5 9.5 H11 V8.5" stroke="#1a1a1a" stroke-width="1.5" fill="none"/><rect x="2" y="11" width="12" height="2.5" fill="#bdbdbd"/><path d="M5.5 11 V13.5 M10 11 V13.5" stroke="#f0f0f0" stroke-width="0.8"/></svg>
<svg style="left:556px;top:719px;" width="16" height="14" viewBox="0 0 16 14"><path d="M4 1 L13 0.5 L14.5 4 L3 5.5Z" fill="#e8e8e8" stroke="#666" stroke-width="0.9"/><path d="M5.5 2.5 L11 2.2" stroke="#999" stroke-width="0.8"/><path d="M1 6 L14 4 Q16 5 16 8 L16 11 Q16 13 14 13.5 L3 14 Q0.5 14 0.5 12 L0.5 8.5 Q0.5 6.5 1 6Z" fill="#6e6e6e"/><path d="M1.5 8 L15 7" stroke="#bdbdbd" stroke-width="1.4"/><path d="M2 10.5 L9 10.2" stroke="#f4f4f4" stroke-width="1.8"/></svg>
<svg style="left:577px;top:719px;" width="15" height="15" viewBox="0 0 15 15"><rect x="0.5" y="0.5" width="14" height="13.5" fill="#d4d4d4" stroke="#6e6e6e" stroke-width="1"/><rect x="2" y="2" width="11" height="8" fill="#ececec"/><path d="M3.5 3 L11.5 9 M11.5 3 L3.5 9" stroke="#6a706a" stroke-width="2.2"/><path d="M2 11.5 H13" stroke="#9a9a9a" stroke-width="1"/></svg>
<svg style="left:602px;top:718px;" width="16" height="16" viewBox="0 0 16 16"><rect x="1" y="1" width="13" height="13" fill="#fff" stroke="#111" stroke-width="1.8"/><rect x="2" y="2" width="11" height="3" fill="#d0d0d0"/><path d="M5.5 2 V13 M9.5 2 V13" stroke="#b0b0b0" stroke-width="2"/><rect x="8.5" y="8" width="7.5" height="7.5" rx="1.5" fill="#b8b8b8"/><path d="M10.3 9.8 L14.2 13.7 M14.2 9.8 L10.3 13.7" stroke="#fff" stroke-width="1.8"/></svg>
<div style="left:440px;top:740px;width:1026px;height:1px;background:#dcdcdc"></div>
<div style="left:443px;top:746px;width:23px;height:23px;background:#e1e1e1;border:1px solid #a0a0a0"></div>
<svg style="left:446px;top:749px;" width="17" height="17" viewBox="0 0 17 17"><path d="M0.5 1.5 Q0.5 0.5 1.5 0.5 L10 0.5 L13.5 4 L13.5 15 Q13.5 16 12.5 16 L1.5 16 Q0.5 16 0.5 15Z" fill="#fafafa" stroke="#777"/><path d="M2.5 14 L13.5 3" stroke="#e8a818" stroke-width="2.2"/><path d="M2.5 14 L13.5 3" stroke="#f8d050" stroke-width="0.8"/><path d="M13 3.5 L15 1.5" stroke="#f09a88" stroke-width="2.2"/><path d="M1.5 15 L3 13.5" stroke="#555" stroke-width="1.2"/></svg>
<div style="left:1200px;top:746px;width:23px;height:23px;background:#e1e1e1;border:1px solid #adadad"></div>
<svg style="left:1205px;top:750px;" width="13" height="14" viewBox="0 0 13 14"><path d="M2 6 Q2 1.5 7 1.5 L9 1.5 L9 0 L12 3 L9 6 L9 4.5 L7 4.5 Q5 4.5 5 6Z" fill="#6fa0d0"/><path d="M11 8 Q11 12.5 6 12.5 L4 12.5 L4 14 L1 11 L4 8 L4 9.5 L6 9.5 Q8 9.5 8 8Z" fill="#6fa0d0"/></svg>
<div style="left:1229px;top:746px;width:105px;height:23px;background:#e1e1e1;border:1px solid #adadad"></div>
<div class="t" style="left:1081px;width:400px;text-align:center;top:750px;font-size:11px;letter-spacing:-0.28px">OK (ctrl ENTER)</div>
<div style="left:1342px;top:746px;width:121px;height:23px;background:#e1e1e1;border:1px solid #adadad"></div>
<div class="t" style="left:1202px;width:400px;text-align:center;top:750px;font-size:11px;">Закрыть (ESCAPE)</div>
<div style="left:393px;top:94px;width:55px;height:28px;border:2px solid #ed1c24;box-sizing:border-box;z-index:50"></div>
<div style="left:442px;top:274px;width:27px;height:112px;border:2px solid #ed1c24;box-sizing:border-box;z-index:50"></div>
<div style="left:1224px;top:740px;width:118px;height:37px;border:2px solid #ed1c24;box-sizing:border-box;z-index:50"></div>
<div style="left:611px;top:871px;width:171px;height:33px;border:2px solid #ed1c24;box-sizing:border-box;z-index:50"></div>
</body></html>
